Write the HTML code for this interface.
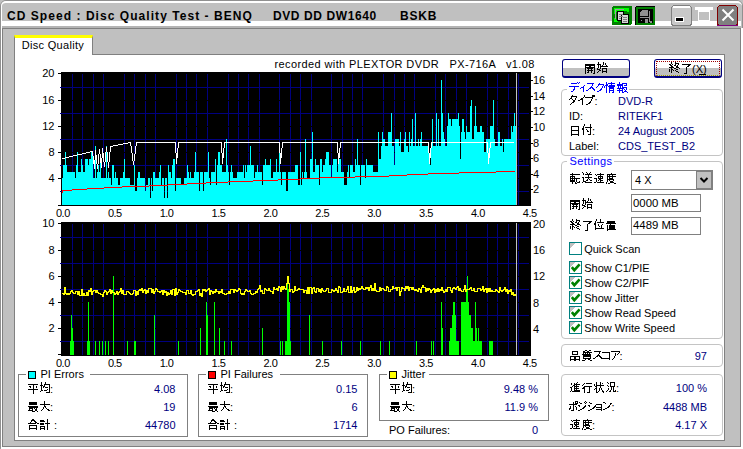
<!DOCTYPE html>
<html><head><meta charset="utf-8"><style>
html,body{margin:0;padding:0;}
body{width:743px;height:449px;overflow:hidden;position:relative;background:#c0c0c0;font-family:'Liberation Sans', sans-serif;font-size:11px;}
.a{position:absolute;box-sizing:border-box;}
.gb{position:absolute;box-sizing:border-box;border:1px solid #c4c4c4;border-radius:4px;}
.sb{position:absolute;box-sizing:border-box;border:1px solid #808080;}
.cb{position:absolute;width:13px;height:13px;box-sizing:border-box;border:1px solid #008080;background:#fff;}
</style></head><body>
<div class="a" style="left:0;top:0;width:743px;height:449px;border-radius:6px 6px 0 0;border:1px solid #909090;background:#c0c0c0"></div>
<div class="a" style="left:1px;top:1px;width:741px;height:447px;border-radius:5px 5px 0 0;border-top:2px solid #fff;border-left:1px solid #fff;"></div>
<div class="a" style="left:2px;top:28px;width:739px;height:419px;border:1px solid #808080"></div>
<div class="a" style="left:1px;top:447px;width:742px;height:2px;background:#fff"></div>
<div class="a" style="left:741px;top:28px;width:2px;height:421px;background:#fff"></div>
<div class="a" style="left:2px;top:21px;width:739px;height:5px;background:#fff"></div>
<div class="a" style="left:2px;top:26px;width:739px;height:2px;background:#b4b4b4"></div>
<svg class="a" style="left:611px;top:5px" width="22" height="21" shape-rendering="crispEdges">
<rect x="1" y="1" width="20" height="19" rx="2" fill="#008000"/>
<path d="M3 3h15v4l-4 -1h-8l-3 3z" fill="#00ff00"/>
<path d="M3 13l5 4h-5z" fill="#00ff00"/>
<path d="M4 4h9v1h-8v9h-1z" fill="#a0a0a0"/>
<rect x="6.5" y="6.5" width="6" height="9" fill="#d8d8d8" stroke="#000"/>
<rect x="10.5" y="9.5" width="7" height="9" fill="#d8d8d8" stroke="#000"/>
<path d="M8 9h4M8 11h4M8 13h2M12 12h4M12 14h4M12 16h4" stroke="#808080"/>
</svg>
<svg class="a" style="left:634px;top:5px" width="22" height="21" shape-rendering="crispEdges">
<rect x="1" y="1" width="20" height="19" rx="2" fill="#000"/>
<rect x="2.5" y="2.5" width="17" height="16" fill="none" stroke="#008000" stroke-width="2"/>
<path d="M8 5h6v6h-8v-4z" fill="#909090"/>
<path d="M6 12h9M15 6v11M7 15h1M11 14h2v3h-2z" stroke="#909090" fill="#909090"/>
<rect x="16" y="16" width="2" height="2" fill="#909090"/>
</svg>
<svg class="a" style="left:670px;top:4px" width="72" height="23" shape-rendering="crispEdges">
<rect x="1.5" y="1.5" width="20" height="20" rx="3" fill="#c8c8c8" stroke="#808080"/>
<rect x="3" y="2" width="17" height="2" fill="#fff"/>
<rect x="5" y="13" width="9" height="5" fill="#fff"/>
<rect x="6" y="14" width="7" height="3" fill="#000"/>
<path d="M25 3h18v3h-18z" fill="#fff"/>
<rect x="28.5" y="6.5" width="11" height="10" fill="#c0c0c0" stroke="#fff"/>
<rect x="28" y="6" width="12" height="2" fill="#fff"/>
<rect x="47.5" y="1.5" width="20" height="20" rx="3" fill="#808080" stroke="#800000" stroke-width="1"/>
<path d="M47 21h21" stroke="#800080"/>
<path d="M52.5 5.5L63.5 16.5M63.5 5.5L52.5 16.5" stroke="#fff" stroke-width="2" shape-rendering="auto"/>
</svg>
<div class="a" style="left:14px;top:35px;width:79px;height:21px;background:#fff;border-top:3px solid #ffff00;border-right:1px solid #808080;border-left:1px solid #808080"></div>
<div class="a" style="left:14px;top:54px;width:711px;height:387px;background:#fff;border:1px solid #808080"></div>
<div class="a" style="left:15px;top:54px;width:77px;height:2px;background:#fff"></div>

<svg width="743" height="449" style="position:absolute;left:0;top:0" shape-rendering="crispEdges">
<rect x="61" y="72" width="470" height="134" fill="#000"/>
<path d="M72.5 74V100M72.5 101V126M72.5 127V152M72.5 153V178M72.5 179V205M82.5 74V100M82.5 101V126M82.5 127V152M82.5 153V178M82.5 179V205M93.5 74V100M93.5 101V126M93.5 127V152M93.5 153V178M93.5 179V205M103.5 74V100M103.5 101V126M103.5 127V152M103.5 153V178M103.5 179V205M124.5 74V100M124.5 101V126M124.5 127V152M124.5 153V178M124.5 179V205M134.5 74V100M134.5 101V126M134.5 127V152M134.5 153V178M134.5 179V205M145.5 74V100M145.5 101V126M145.5 127V152M145.5 153V178M145.5 179V205M155.5 74V100M155.5 101V126M155.5 127V152M155.5 153V178M155.5 179V205M176.5 74V100M176.5 101V126M176.5 127V152M176.5 153V178M176.5 179V205M186.5 74V100M186.5 101V126M186.5 127V152M186.5 153V178M186.5 179V205M196.5 74V100M196.5 101V126M196.5 127V152M196.5 153V178M196.5 179V205M207.5 74V100M207.5 101V126M207.5 127V152M207.5 153V178M207.5 179V205M228.5 74V100M228.5 101V126M228.5 127V152M228.5 153V178M228.5 179V205M238.5 74V100M238.5 101V126M238.5 127V152M238.5 153V178M238.5 179V205M248.5 74V100M248.5 101V126M248.5 127V152M248.5 153V178M248.5 179V205M259.5 74V100M259.5 101V126M259.5 127V152M259.5 153V178M259.5 179V205M279.5 74V100M279.5 101V126M279.5 127V152M279.5 153V178M279.5 179V205M290.5 74V100M290.5 101V126M290.5 127V152M290.5 153V178M290.5 179V205M300.5 74V100M300.5 101V126M300.5 127V152M300.5 153V178M300.5 179V205M311.5 74V100M311.5 101V126M311.5 127V152M311.5 153V178M311.5 179V205M331.5 74V100M331.5 101V126M331.5 127V152M331.5 153V178M331.5 179V205M342.5 74V100M342.5 101V126M342.5 127V152M342.5 153V178M342.5 179V205M352.5 74V100M352.5 101V126M352.5 127V152M352.5 153V178M352.5 179V205M362.5 74V100M362.5 101V126M362.5 127V152M362.5 153V178M362.5 179V205M383.5 74V100M383.5 101V126M383.5 127V152M383.5 153V178M383.5 179V205M394.5 74V100M394.5 101V126M394.5 127V152M394.5 153V178M394.5 179V205M404.5 74V100M404.5 101V126M404.5 127V152M404.5 153V178M404.5 179V205M414.5 74V100M414.5 101V126M414.5 127V152M414.5 153V178M414.5 179V205M435.5 74V100M435.5 101V126M435.5 127V152M435.5 153V178M435.5 179V205M445.5 74V100M445.5 101V126M445.5 127V152M445.5 153V178M445.5 179V205M456.5 74V100M456.5 101V126M456.5 127V152M456.5 153V178M456.5 179V205M466.5 74V100M466.5 101V126M466.5 127V152M466.5 153V178M466.5 179V205M487.5 74V100M487.5 101V126M487.5 127V152M487.5 153V178M487.5 179V205M497.5 74V100M497.5 101V126M497.5 127V152M497.5 153V178M497.5 179V205M508.5 74V100M508.5 101V126M508.5 127V152M508.5 153V178M508.5 179V205M518.5 74V100M518.5 101V126M518.5 127V152M518.5 153V178M518.5 179V205M60 87.5H529M60 113.5H529M60 139.5H529M60 165.5H529M60 191.5H529" stroke="#000080" stroke-width="1" fill="none"/>
<path d="M62 178h1V205h-1zM63 165h1V205h-1zM64 165h1V205h-1zM65 152h1V205h-1zM66 165h1V205h-1zM67 172h1V205h-1zM68 172h1V205h-1zM69 172h1V205h-1zM70 172h1V205h-1zM71 172h1V205h-1zM72 172h1V205h-1zM73 172h1V205h-1zM74 172h1V205h-1zM75 178h1V205h-1zM76 165h1V205h-1zM77 152h1V205h-1zM78 172h1V205h-1zM79 172h1V205h-1zM80 172h1V205h-1zM81 159h1V205h-1zM82 165h1V205h-1zM83 172h1V205h-1zM84 172h1V205h-1zM85 159h1V205h-1zM86 159h1V205h-1zM87 159h1V205h-1zM88 165h1V205h-1zM89 159h1V205h-1zM90 159h1V205h-1zM91 152h1V205h-1zM92 152h1V205h-1zM93 178h1V205h-1zM94 178h1V205h-1zM95 146h1V205h-1zM96 178h1V205h-1zM97 172h1V205h-1zM98 165h1V205h-1zM99 172h1V205h-1zM100 159h1V205h-1zM101 178h1V205h-1zM102 178h1V205h-1zM103 178h1V205h-1zM104 178h1V205h-1zM105 178h1V205h-1zM106 146h1V205h-1zM107 178h1V205h-1zM108 172h1V205h-1zM109 178h1V205h-1zM110 178h1V205h-1zM111 185h1V205h-1zM112 165h1V205h-1zM113 165h1V205h-1zM114 178h1V205h-1zM115 172h1V205h-1zM116 178h1V205h-1zM117 178h1V205h-1zM118 185h1V205h-1zM119 185h1V205h-1zM120 178h1V205h-1zM121 178h1V205h-1zM122 178h1V205h-1zM123 172h1V205h-1zM124 159h1V205h-1zM125 178h1V205h-1zM126 178h1V205h-1zM127 178h1V205h-1zM128 178h1V205h-1zM129 178h1V205h-1zM130 185h1V205h-1zM131 185h1V205h-1zM132 185h1V205h-1zM133 185h1V205h-1zM134 165h1V205h-1zM135 191h1V205h-1zM136 191h1V205h-1zM137 178h1V205h-1zM138 172h1V205h-1zM139 172h1V205h-1zM140 178h1V205h-1zM141 178h1V205h-1zM142 178h1V205h-1zM143 178h1V205h-1zM144 178h1V205h-1zM145 191h1V205h-1zM146 185h1V205h-1zM147 185h1V205h-1zM148 178h1V205h-1zM149 178h1V205h-1zM150 198h1V205h-1zM151 178h1V205h-1zM152 191h1V205h-1zM153 172h1V205h-1zM154 172h1V205h-1zM155 178h1V205h-1zM156 178h1V205h-1zM157 178h1V205h-1zM158 178h1V205h-1zM159 172h1V205h-1zM160 165h1V205h-1zM161 185h1V205h-1zM162 178h1V205h-1zM163 178h1V205h-1zM164 198h1V205h-1zM165 178h1V205h-1zM166 178h1V205h-1zM167 198h1V205h-1zM168 165h1V205h-1zM169 172h1V205h-1zM170 172h1V205h-1zM171 178h1V205h-1zM172 165h1V205h-1zM173 159h1V205h-1zM174 159h1V205h-1zM175 191h1V205h-1zM176 178h1V205h-1zM177 178h1V205h-1zM178 178h1V205h-1zM179 178h1V205h-1zM180 178h1V205h-1zM181 185h1V205h-1zM182 185h1V205h-1zM183 185h1V205h-1zM184 178h1V205h-1zM185 178h1V205h-1zM186 178h1V205h-1zM187 165h1V205h-1zM188 172h1V205h-1zM189 178h1V205h-1zM190 172h1V205h-1zM191 178h1V205h-1zM192 178h1V205h-1zM193 178h1V205h-1zM194 172h1V205h-1zM195 152h1V205h-1zM196 172h1V205h-1zM197 172h1V205h-1zM198 172h1V205h-1zM199 191h1V205h-1zM200 172h1V205h-1zM201 172h1V205h-1zM202 172h1V205h-1zM203 191h1V205h-1zM204 172h1V205h-1zM205 172h1V205h-1zM206 172h1V205h-1zM207 172h1V205h-1zM208 152h1V205h-1zM209 178h1V205h-1zM210 185h1V205h-1zM211 172h1V205h-1zM212 172h1V205h-1zM213 172h1V205h-1zM214 172h1V205h-1zM215 159h1V205h-1zM216 185h1V205h-1zM217 165h1V205h-1zM218 152h1V205h-1zM219 152h1V205h-1zM220 165h1V205h-1zM221 165h1V205h-1zM222 172h1V205h-1zM223 172h1V205h-1zM224 172h1V205h-1zM225 172h1V205h-1zM226 139h1V205h-1zM227 165h1V205h-1zM228 172h1V205h-1zM229 185h1V205h-1zM230 172h1V205h-1zM231 165h1V205h-1zM232 172h1V205h-1zM233 178h1V205h-1zM234 178h1V205h-1zM235 178h1V205h-1zM236 178h1V205h-1zM237 172h1V205h-1zM238 172h1V205h-1zM239 172h1V205h-1zM240 172h1V205h-1zM241 172h1V205h-1zM242 172h1V205h-1zM243 165h1V205h-1zM244 178h1V205h-1zM245 165h1V205h-1zM246 172h1V205h-1zM247 165h1V205h-1zM248 165h1V205h-1zM249 165h1V205h-1zM250 146h1V205h-1zM251 165h1V205h-1zM252 165h1V205h-1zM253 165h1V205h-1zM254 178h1V205h-1zM255 172h1V205h-1zM256 172h1V205h-1zM257 165h1V205h-1zM258 172h1V205h-1zM259 172h1V205h-1zM260 172h1V205h-1zM261 172h1V205h-1zM262 185h1V205h-1zM263 165h1V205h-1zM264 165h1V205h-1zM265 159h1V205h-1zM266 165h1V205h-1zM267 165h1V205h-1zM268 165h1V205h-1zM269 165h1V205h-1zM270 159h1V205h-1zM271 178h1V205h-1zM272 178h1V205h-1zM273 172h1V205h-1zM274 172h1V205h-1zM275 172h1V205h-1zM276 159h1V205h-1zM277 172h1V205h-1zM278 172h1V205h-1zM279 152h1V205h-1zM280 172h1V205h-1zM281 185h1V205h-1zM282 172h1V205h-1zM283 172h1V205h-1zM284 172h1V205h-1zM285 172h1V205h-1zM286 191h1V205h-1zM287 191h1V205h-1zM288 172h1V205h-1zM289 172h1V205h-1zM290 172h1V205h-1zM291 172h1V205h-1zM292 172h1V205h-1zM293 172h1V205h-1zM294 172h1V205h-1zM295 165h1V205h-1zM296 165h1V205h-1zM297 165h1V205h-1zM298 185h1V205h-1zM299 185h1V205h-1zM300 152h1V205h-1zM301 185h1V205h-1zM302 172h1V205h-1zM303 178h1V205h-1zM304 172h1V205h-1zM305 139h1V205h-1zM306 172h1V205h-1zM307 178h1V205h-1zM308 178h1V205h-1zM309 178h1V205h-1zM310 159h1V205h-1zM311 159h1V205h-1zM312 132h1V205h-1zM313 172h1V205h-1zM314 172h1V205h-1zM315 159h1V205h-1zM316 165h1V205h-1zM317 165h1V205h-1zM318 165h1V205h-1zM319 185h1V205h-1zM320 159h1V205h-1zM321 159h1V205h-1zM322 172h1V205h-1zM323 165h1V205h-1zM324 165h1V205h-1zM325 159h1V205h-1zM326 152h1V205h-1zM327 152h1V205h-1zM328 152h1V205h-1zM329 165h1V205h-1zM330 165h1V205h-1zM331 178h1V205h-1zM332 165h1V205h-1zM333 159h1V205h-1zM334 159h1V205h-1zM335 159h1V205h-1zM336 159h1V205h-1zM337 172h1V205h-1zM338 159h1V205h-1zM339 159h1V205h-1zM340 159h1V205h-1zM341 172h1V205h-1zM342 172h1V205h-1zM343 172h1V205h-1zM344 185h1V205h-1zM345 185h1V205h-1zM346 185h1V205h-1zM347 172h1V205h-1zM348 165h1V205h-1zM349 178h1V205h-1zM350 165h1V205h-1zM351 165h1V205h-1zM352 165h1V205h-1zM353 172h1V205h-1zM354 172h1V205h-1zM355 159h1V205h-1zM356 165h1V205h-1zM357 139h1V205h-1zM358 165h1V205h-1zM359 165h1V205h-1zM360 185h1V205h-1zM361 165h1V205h-1zM362 165h1V205h-1zM363 165h1V205h-1zM364 165h1V205h-1zM365 178h1V205h-1zM366 159h1V205h-1zM367 165h1V205h-1zM368 165h1V205h-1zM369 165h1V205h-1zM370 165h1V205h-1zM371 165h1V205h-1zM372 165h1V205h-1zM373 172h1V205h-1zM374 172h1V205h-1zM375 172h1V205h-1zM376 172h1V205h-1zM377 172h1V205h-1zM378 132h1V205h-1zM379 159h1V205h-1zM380 159h1V205h-1zM381 146h1V205h-1zM382 132h1V205h-1zM383 139h1V205h-1zM384 139h1V205h-1zM385 146h1V205h-1zM386 146h1V205h-1zM387 146h1V205h-1zM388 132h1V205h-1zM389 132h1V205h-1zM390 132h1V205h-1zM391 113h1V205h-1zM392 146h1V205h-1zM393 146h1V205h-1zM394 165h1V205h-1zM395 139h1V205h-1zM396 139h1V205h-1zM397 139h1V205h-1zM398 139h1V205h-1zM399 146h1V205h-1zM400 132h1V205h-1zM401 152h1V205h-1zM402 152h1V205h-1zM403 152h1V205h-1zM404 139h1V205h-1zM405 132h1V205h-1zM406 146h1V205h-1zM407 146h1V205h-1zM408 152h1V205h-1zM409 132h1V205h-1zM410 146h1V205h-1zM411 139h1V205h-1zM412 119h1V205h-1zM413 146h1V205h-1zM414 146h1V205h-1zM415 113h1V205h-1zM416 146h1V205h-1zM417 146h1V205h-1zM418 139h1V205h-1zM419 146h1V205h-1zM420 139h1V205h-1zM421 132h1V205h-1zM422 146h1V205h-1zM423 146h1V205h-1zM424 146h1V205h-1zM425 146h1V205h-1zM426 146h1V205h-1zM427 146h1V205h-1zM428 146h1V205h-1zM429 159h1V205h-1zM430 165h1V205h-1zM431 146h1V205h-1zM432 119h1V205h-1zM433 146h1V205h-1zM434 146h1V205h-1zM435 146h1V205h-1zM436 113h1V205h-1zM437 146h1V205h-1zM438 119h1V205h-1zM439 146h1V205h-1zM440 146h1V205h-1zM441 80h1V205h-1zM442 113h1V205h-1zM443 132h1V205h-1zM444 139h1V205h-1zM445 146h1V205h-1zM446 146h1V205h-1zM447 126h1V205h-1zM448 113h1V205h-1zM449 119h1V205h-1zM450 119h1V205h-1zM451 126h1V205h-1zM452 119h1V205h-1zM453 119h1V205h-1zM454 119h1V205h-1zM455 119h1V205h-1zM456 119h1V205h-1zM457 119h1V205h-1zM458 113h1V205h-1zM459 126h1V205h-1zM460 159h1V205h-1zM461 132h1V205h-1zM462 119h1V205h-1zM463 119h1V205h-1zM464 132h1V205h-1zM465 139h1V205h-1zM466 126h1V205h-1zM467 132h1V205h-1zM468 132h1V205h-1zM469 132h1V205h-1zM470 106h1V205h-1zM471 100h1V205h-1zM472 139h1V205h-1zM473 139h1V205h-1zM474 126h1V205h-1zM475 106h1V205h-1zM476 126h1V205h-1zM477 132h1V205h-1zM478 132h1V205h-1zM479 132h1V205h-1zM480 126h1V205h-1zM481 126h1V205h-1zM482 132h1V205h-1zM483 132h1V205h-1zM484 152h1V205h-1zM485 152h1V205h-1zM486 139h1V205h-1zM487 139h1V205h-1zM488 139h1V205h-1zM489 139h1V205h-1zM490 126h1V205h-1zM491 126h1V205h-1zM492 126h1V205h-1zM493 100h1V205h-1zM494 139h1V205h-1zM495 146h1V205h-1zM496 146h1V205h-1zM497 146h1V205h-1zM498 132h1V205h-1zM499 132h1V205h-1zM500 146h1V205h-1zM501 146h1V205h-1zM502 139h1V205h-1zM503 152h1V205h-1zM504 139h1V205h-1zM505 139h1V205h-1zM506 139h1V205h-1zM507 139h1V205h-1zM508 139h1V205h-1zM509 139h1V205h-1zM510 139h1V205h-1zM511 126h1V205h-1zM512 132h1V205h-1zM513 126h1V205h-1zM514 113h1V205h-1zM515 126h1V205h-1zM516 126h1V205h-1z" fill="#00ffff"/>
<path d="M496 171h19v1h-19zM355 176h34v1h-34zM253 180h25v1h-25zM459 172h37v1h-37zM228 181h25v1h-25zM300 178h20v1h-20zM72 189h15v1h-15zM278 179h22v1h-22zM389 175h18v1h-18zM320 177h35v1h-35zM104 187h18v1h-18zM428 173h31v1h-31zM149 185h19v1h-19zM206 182h22v1h-22zM187 183h19v1h-19zM168 184h19v1h-19zM87 188h17v1h-17zM407 174h21v1h-21zM122 186h27v1h-27zM62 190h10v1h-10zM62 192h1v1h-1zM62 191h1v1h-1z" fill="#ff0000"/>
<path d="M128 142h3v1h-3zM136 142h40v1h-40zM178 142h44v1h-44zM224 142h56v1h-56zM282 142h56v1h-56zM340 142h89v1h-89zM431 142h57v1h-57zM490 142h24v1h-24zM110 146h3v1h-3zM131 146h1v1h-1zM135 146h1v1h-1zM175 146h1v1h-1zM178 146h1v1h-1zM221 146h1v1h-1zM224 146h1v1h-1zM279 146h1v1h-1zM282 146h1v1h-1zM337 146h1v1h-1zM340 146h1v1h-1zM428 146h1v1h-1zM431 146h1v1h-1zM487 146h1v1h-1zM490 146h1v1h-1zM73 155h4v1h-4zM92 155h1v1h-1zM95 155h2v1h-2zM98 155h1v1h-1zM100 155h1v1h-1zM102 155h2v1h-2zM105 155h1v1h-1zM107 155h1v1h-1zM109 155h1v1h-1zM132 155h1v1h-1zM134 155h1v1h-1zM176 155h2v1h-2zM222 155h2v1h-2zM280 155h2v1h-2zM338 155h2v1h-2zM429 155h2v1h-2zM488 155h2v1h-2zM102 148h1v1h-1zM106 148h1v1h-1zM110 148h1v1h-1zM131 148h1v1h-1zM135 148h1v1h-1zM175 148h1v1h-1zM177 148h1v1h-1zM221 148h1v1h-1zM223 148h1v1h-1zM279 148h1v1h-1zM281 148h1v1h-1zM337 148h1v1h-1zM339 148h1v1h-1zM428 148h1v1h-1zM430 148h1v1h-1zM487 148h1v1h-1zM489 148h1v1h-1zM82 153h4v1h-4zM92 153h1v1h-1zM95 153h1v1h-1zM99 153h1v1h-1zM102 153h2v1h-2zM105 153h1v1h-1zM107 153h1v1h-1zM109 153h1v1h-1zM132 153h1v1h-1zM135 153h1v1h-1zM176 153h2v1h-2zM222 153h2v1h-2zM280 153h2v1h-2zM338 153h2v1h-2zM429 153h2v1h-2zM488 153h2v1h-2zM65 157h4v1h-4zM93 157h1v1h-1zM95 157h2v1h-2zM98 157h1v1h-1zM100 157h1v1h-1zM102 157h2v1h-2zM105 157h1v1h-1zM107 157h1v1h-1zM109 157h1v1h-1zM132 157h1v1h-1zM134 157h1v1h-1zM176 157h2v1h-2zM222 157h2v1h-2zM280 157h2v1h-2zM338 157h2v1h-2zM429 157h2v1h-2zM488 157h2v1h-2zM93 159h1v1h-1zM95 159h2v1h-2zM98 159h1v1h-1zM100 159h2v1h-2zM103 159h1v1h-1zM105 159h1v1h-1zM107 159h1v1h-1zM109 159h1v1h-1zM132 159h1v1h-1zM134 159h1v1h-1zM176 159h1v1h-1zM222 159h1v1h-1zM280 159h1v1h-1zM338 159h1v1h-1zM429 159h1v1h-1zM488 159h1v1h-1zM94 166h1v1h-1zM97 166h1v1h-1zM101 166h1v1h-1zM104 166h1v1h-1zM108 166h1v1h-1zM62 158h3v1h-3zM93 158h1v1h-1zM95 158h2v1h-2zM98 158h1v1h-1zM100 158h2v1h-2zM103 158h1v1h-1zM105 158h1v1h-1zM107 158h1v1h-1zM109 158h1v1h-1zM132 158h1v1h-1zM134 158h1v1h-1zM176 158h1v1h-1zM222 158h1v1h-1zM280 158h1v1h-1zM338 158h1v1h-1zM429 158h1v1h-1zM488 158h1v1h-1zM93 160h2v1h-2zM96 160h1v1h-1zM98 160h1v1h-1zM100 160h2v1h-2zM103 160h1v1h-1zM105 160h1v1h-1zM107 160h1v1h-1zM109 160h1v1h-1zM132 160h1v1h-1zM134 160h1v1h-1zM176 160h1v1h-1zM222 160h1v1h-1zM280 160h1v1h-1zM338 160h1v1h-1zM429 160h1v1h-1zM488 160h1v1h-1zM77 154h5v1h-5zM92 154h1v1h-1zM95 154h1v1h-1zM98 154h1v1h-1zM100 154h1v1h-1zM102 154h2v1h-2zM105 154h1v1h-1zM107 154h1v1h-1zM109 154h1v1h-1zM132 154h1v1h-1zM134 154h1v1h-1zM176 154h2v1h-2zM222 154h2v1h-2zM280 154h2v1h-2zM338 154h2v1h-2zM429 154h2v1h-2zM488 154h2v1h-2zM93 163h2v1h-2zM96 163h1v1h-1zM98 163h1v1h-1zM101 163h1v1h-1zM104 163h1v1h-1zM108 163h1v1h-1zM133 163h1v1h-1zM176 163h1v1h-1zM222 163h1v1h-1zM280 163h1v1h-1zM338 163h1v1h-1zM429 163h1v1h-1zM488 163h1v1h-1zM69 156h4v1h-4zM93 156h1v1h-1zM95 156h2v1h-2zM98 156h1v1h-1zM100 156h1v1h-1zM102 156h2v1h-2zM105 156h1v1h-1zM107 156h1v1h-1zM109 156h1v1h-1zM132 156h1v1h-1zM134 156h1v1h-1zM176 156h2v1h-2zM222 156h2v1h-2zM280 156h2v1h-2zM338 156h2v1h-2zM429 156h2v1h-2zM488 156h2v1h-2zM93 162h2v1h-2zM96 162h1v1h-1zM98 162h1v1h-1zM100 162h2v1h-2zM104 162h1v1h-1zM108 162h1v1h-1zM133 162h1v1h-1zM176 162h1v1h-1zM222 162h1v1h-1zM280 162h1v1h-1zM338 162h1v1h-1zM429 162h1v1h-1zM488 162h1v1h-1zM95 150h1v1h-1zM99 150h1v1h-1zM102 150h1v1h-1zM106 150h1v1h-1zM110 150h1v1h-1zM131 150h1v1h-1zM135 150h1v1h-1zM175 150h1v1h-1zM177 150h1v1h-1zM221 150h1v1h-1zM223 150h1v1h-1zM279 150h1v1h-1zM281 150h1v1h-1zM337 150h1v1h-1zM339 150h1v1h-1zM428 150h1v1h-1zM430 150h1v1h-1zM487 150h1v1h-1zM489 150h1v1h-1zM99 149h1v1h-1zM102 149h1v1h-1zM106 149h1v1h-1zM110 149h1v1h-1zM131 149h1v1h-1zM135 149h1v1h-1zM175 149h1v1h-1zM177 149h1v1h-1zM221 149h1v1h-1zM223 149h1v1h-1zM279 149h1v1h-1zM281 149h1v1h-1zM337 149h1v1h-1zM339 149h1v1h-1zM428 149h1v1h-1zM430 149h1v1h-1zM487 149h1v1h-1zM489 149h1v1h-1zM118 144h5v1h-5zM130 144h1v1h-1zM136 144h1v1h-1zM175 144h1v1h-1zM178 144h1v1h-1zM221 144h1v1h-1zM224 144h1v1h-1zM279 144h1v1h-1zM282 144h1v1h-1zM337 144h1v1h-1zM340 144h1v1h-1zM428 144h1v1h-1zM431 144h1v1h-1zM487 144h1v1h-1zM490 144h1v1h-1zM123 143h5v1h-5zM130 143h1v1h-1zM136 143h1v1h-1zM175 143h1v1h-1zM178 143h1v1h-1zM221 143h1v1h-1zM224 143h1v1h-1zM279 143h1v1h-1zM282 143h1v1h-1zM337 143h1v1h-1zM340 143h1v1h-1zM428 143h1v1h-1zM431 143h1v1h-1zM487 143h1v1h-1zM490 143h1v1h-1zM86 152h4v1h-4zM92 152h1v1h-1zM95 152h1v1h-1zM99 152h1v1h-1zM102 152h1v1h-1zM105 152h1v1h-1zM107 152h1v1h-1zM109 152h1v1h-1zM131 152h1v1h-1zM135 152h1v1h-1zM175 152h1v1h-1zM177 152h1v1h-1zM221 152h1v1h-1zM223 152h1v1h-1zM279 152h1v1h-1zM281 152h1v1h-1zM337 152h1v1h-1zM339 152h1v1h-1zM428 152h1v1h-1zM430 152h1v1h-1zM487 152h1v1h-1zM489 152h1v1h-1zM94 167h1v1h-1zM97 167h1v1h-1zM101 167h1v1h-1zM108 167h1v1h-1zM90 151h3v1h-3zM95 151h1v1h-1zM99 151h1v1h-1zM102 151h1v1h-1zM106 151h1v1h-1zM110 151h1v1h-1zM131 151h1v1h-1zM135 151h1v1h-1zM175 151h1v1h-1zM177 151h1v1h-1zM221 151h1v1h-1zM223 151h1v1h-1zM279 151h1v1h-1zM281 151h1v1h-1zM337 151h1v1h-1zM339 151h1v1h-1zM428 151h1v1h-1zM430 151h1v1h-1zM487 151h1v1h-1zM489 151h1v1h-1zM93 161h2v1h-2zM96 161h1v1h-1zM98 161h1v1h-1zM100 161h2v1h-2zM103 161h1v1h-1zM105 161h1v1h-1zM107 161h1v1h-1zM109 161h1v1h-1zM133 161h1v1h-1zM176 161h1v1h-1zM222 161h1v1h-1zM280 161h1v1h-1zM338 161h1v1h-1zM429 161h1v1h-1zM488 161h1v1h-1zM113 145h5v1h-5zM130 145h1v1h-1zM136 145h1v1h-1zM175 145h1v1h-1zM178 145h1v1h-1zM221 145h1v1h-1zM224 145h1v1h-1zM279 145h1v1h-1zM282 145h1v1h-1zM337 145h1v1h-1zM340 145h1v1h-1zM428 145h1v1h-1zM431 145h1v1h-1zM487 145h1v1h-1zM490 145h1v1h-1zM106 147h1v1h-1zM110 147h1v1h-1zM131 147h1v1h-1zM135 147h1v1h-1zM175 147h1v1h-1zM178 147h1v1h-1zM221 147h1v1h-1zM224 147h1v1h-1zM279 147h1v1h-1zM282 147h1v1h-1zM337 147h1v1h-1zM340 147h1v1h-1zM428 147h1v1h-1zM431 147h1v1h-1zM487 147h1v1h-1zM490 147h1v1h-1zM94 165h1v1h-1zM97 165h1v1h-1zM101 165h1v1h-1zM104 165h1v1h-1zM108 165h1v1h-1zM94 164h1v1h-1zM97 164h1v1h-1zM101 164h1v1h-1zM104 164h1v1h-1zM108 164h1v1h-1zM133 164h1v1h-1zM94 168h1v1h-1zM97 168h1v1h-1z" fill="#ffffff"/>
<rect x="516" y="73" width="1" height="132" fill="#c0c0c0"/>
<rect x="61" y="222" width="470" height="134" fill="#000"/>
<path d="M72.5 224V250M72.5 251V276M72.5 277V302M72.5 303V328M72.5 329V355M82.5 224V250M82.5 251V276M82.5 277V302M82.5 303V328M82.5 329V355M93.5 224V250M93.5 251V276M93.5 277V302M93.5 303V328M93.5 329V355M103.5 224V250M103.5 251V276M103.5 277V302M103.5 303V328M103.5 329V355M124.5 224V250M124.5 251V276M124.5 277V302M124.5 303V328M124.5 329V355M134.5 224V250M134.5 251V276M134.5 277V302M134.5 303V328M134.5 329V355M145.5 224V250M145.5 251V276M145.5 277V302M145.5 303V328M145.5 329V355M155.5 224V250M155.5 251V276M155.5 277V302M155.5 303V328M155.5 329V355M176.5 224V250M176.5 251V276M176.5 277V302M176.5 303V328M176.5 329V355M186.5 224V250M186.5 251V276M186.5 277V302M186.5 303V328M186.5 329V355M196.5 224V250M196.5 251V276M196.5 277V302M196.5 303V328M196.5 329V355M207.5 224V250M207.5 251V276M207.5 277V302M207.5 303V328M207.5 329V355M228.5 224V250M228.5 251V276M228.5 277V302M228.5 303V328M228.5 329V355M238.5 224V250M238.5 251V276M238.5 277V302M238.5 303V328M238.5 329V355M248.5 224V250M248.5 251V276M248.5 277V302M248.5 303V328M248.5 329V355M259.5 224V250M259.5 251V276M259.5 277V302M259.5 303V328M259.5 329V355M279.5 224V250M279.5 251V276M279.5 277V302M279.5 303V328M279.5 329V355M290.5 224V250M290.5 251V276M290.5 277V302M290.5 303V328M290.5 329V355M300.5 224V250M300.5 251V276M300.5 277V302M300.5 303V328M300.5 329V355M311.5 224V250M311.5 251V276M311.5 277V302M311.5 303V328M311.5 329V355M331.5 224V250M331.5 251V276M331.5 277V302M331.5 303V328M331.5 329V355M342.5 224V250M342.5 251V276M342.5 277V302M342.5 303V328M342.5 329V355M352.5 224V250M352.5 251V276M352.5 277V302M352.5 303V328M352.5 329V355M362.5 224V250M362.5 251V276M362.5 277V302M362.5 303V328M362.5 329V355M383.5 224V250M383.5 251V276M383.5 277V302M383.5 303V328M383.5 329V355M394.5 224V250M394.5 251V276M394.5 277V302M394.5 303V328M394.5 329V355M404.5 224V250M404.5 251V276M404.5 277V302M404.5 303V328M404.5 329V355M414.5 224V250M414.5 251V276M414.5 277V302M414.5 303V328M414.5 329V355M435.5 224V250M435.5 251V276M435.5 277V302M435.5 303V328M435.5 329V355M445.5 224V250M445.5 251V276M445.5 277V302M445.5 303V328M445.5 329V355M456.5 224V250M456.5 251V276M456.5 277V302M456.5 303V328M456.5 329V355M466.5 224V250M466.5 251V276M466.5 277V302M466.5 303V328M466.5 329V355M487.5 224V250M487.5 251V276M487.5 277V302M487.5 303V328M487.5 329V355M497.5 224V250M497.5 251V276M497.5 277V302M497.5 303V328M497.5 329V355M508.5 224V250M508.5 251V276M508.5 277V302M508.5 303V328M508.5 329V355M518.5 224V250M518.5 251V276M518.5 277V302M518.5 303V328M518.5 329V355M60 237.5H529M60 263.5H529M60 289.5H529M60 315.5H529M60 341.5H529" stroke="#000080" stroke-width="1" fill="none"/>
<path d="M70 341h1V355h-1zM71 315h1V355h-1zM72 328h1V355h-1zM73 341h1V355h-1zM87 341h1V355h-1zM88 302h1V355h-1zM89 341h1V355h-1zM95 341h1V355h-1zM99 341h1V355h-1zM102 341h1V355h-1zM105 341h1V355h-1zM108 341h1V355h-1zM113 276h1V355h-1zM127 341h1V355h-1zM134 341h1V355h-1zM135 341h1V355h-1zM154 315h1V355h-1zM178 341h1V355h-1zM200 328h1V355h-1zM206 302h1V355h-1zM207 315h1V355h-1zM214 302h1V355h-1zM219 328h1V355h-1zM224 341h1V355h-1zM231 341h1V355h-1zM262 328h1V355h-1zM280 341h1V355h-1zM282 341h1V355h-1zM285 341h1V355h-1zM286 341h1V355h-1zM287 276h1V355h-1zM288 289h1V355h-1zM289 302h1V355h-1zM290 341h1V355h-1zM309 315h1V355h-1zM322 341h1V355h-1zM341 341h1V355h-1zM360 341h1V355h-1zM380 341h1V355h-1zM389 341h1V355h-1zM416 341h1V355h-1zM431 341h1V355h-1zM433 341h1V355h-1zM441 302h1V355h-1zM442 328h1V355h-1zM449 341h1V355h-1zM450 328h1V355h-1zM451 328h1V355h-1zM452 315h1V355h-1zM453 302h1V355h-1zM454 302h1V355h-1zM455 315h1V355h-1zM456 341h1V355h-1zM457 341h1V355h-1zM458 341h1V355h-1zM461 302h1V355h-1zM462 302h1V355h-1zM463 302h1V355h-1zM464 302h1V355h-1zM465 302h1V355h-1zM466 289h1V355h-1zM467 276h1V355h-1zM468 302h1V355h-1zM469 315h1V355h-1zM470 315h1V355h-1zM471 328h1V355h-1zM472 328h1V355h-1zM473 341h1V355h-1zM474 341h1V355h-1zM475 302h1V355h-1zM476 328h1V355h-1zM477 341h1V355h-1zM478 328h1V355h-1zM479 341h1V355h-1zM480 341h1V355h-1zM481 341h1V355h-1zM489 341h1V355h-1zM490 341h1V355h-1zM491 341h1V355h-1zM492 341h1V355h-1z" fill="#00ff00"/>
<path d="M62 293h1V294h-1zM63 293h1V295h-1zM64 287h1V295h-1zM65 287h1V294h-1zM66 293h1V295h-1zM67 293h1V295h-1zM68 293h1V295h-1zM69 293h1V295h-1zM70 291h1V294h-1zM71 290h1V292h-1zM72 290h1V293h-1zM73 292h1V294h-1zM74 293h1V294h-1zM75 291h1V294h-1zM76 291h1V292h-1zM77 291h1V295h-1zM78 291h1V295h-1zM79 291h1V296h-1zM80 295h1V296h-1zM81 289h1V296h-1zM82 289h1V296h-1zM83 293h1V296h-1zM84 293h1V296h-1zM85 295h1V296h-1zM86 292h1V296h-1zM87 292h1V296h-1zM88 290h1V296h-1zM89 290h1V292h-1zM90 288h1V292h-1zM91 288h1V295h-1zM92 291h1V295h-1zM93 290h1V292h-1zM94 290h1V291h-1zM95 290h1V293h-1zM96 290h1V293h-1zM97 290h1V293h-1zM98 292h1V294h-1zM99 293h1V294h-1zM100 293h1V295h-1zM101 294h1V295h-1zM102 294h1V297h-1zM103 292h1V297h-1zM104 290h1V293h-1zM105 290h1V292h-1zM106 291h1V295h-1zM107 292h1V295h-1zM108 291h1V293h-1zM109 289h1V292h-1zM110 289h1V294h-1zM111 290h1V294h-1zM112 290h1V293h-1zM113 292h1V293h-1zM114 292h1V295h-1zM115 293h1V295h-1zM116 291h1V294h-1zM117 291h1V295h-1zM118 292h1V295h-1zM119 291h1V293h-1zM120 288h1V292h-1zM121 288h1V294h-1zM122 290h1V294h-1zM123 290h1V295h-1zM124 294h1V295h-1zM125 294h1V295h-1zM126 291h1V295h-1zM127 291h1V292h-1zM128 291h1V293h-1zM129 292h1V294h-1zM130 293h1V295h-1zM131 294h1V295h-1zM132 293h1V295h-1zM133 290h1V294h-1zM134 290h1V291h-1zM135 290h1V296h-1zM136 291h1V296h-1zM137 291h1V295h-1zM138 290h1V295h-1zM139 289h1V291h-1zM140 289h1V291h-1zM141 288h1V291h-1zM142 288h1V293h-1zM143 290h1V293h-1zM144 289h1V291h-1zM145 289h1V294h-1zM146 290h1V294h-1zM147 290h1V293h-1zM148 288h1V293h-1zM149 288h1V289h-1zM150 288h1V289h-1zM151 288h1V293h-1zM152 289h1V293h-1zM153 289h1V294h-1zM154 291h1V294h-1zM155 288h1V292h-1zM156 288h1V290h-1zM157 289h1V292h-1zM158 291h1V292h-1zM159 291h1V293h-1zM160 291h1V293h-1zM161 290h1V292h-1zM162 290h1V295h-1zM163 290h1V295h-1zM164 290h1V293h-1zM165 291h1V293h-1zM166 291h1V296h-1zM167 292h1V296h-1zM168 292h1V295h-1zM169 293h1V295h-1zM170 290h1V294h-1zM171 290h1V295h-1zM172 289h1V295h-1zM173 289h1V290h-1zM174 289h1V296h-1zM175 288h1V296h-1zM176 288h1V295h-1zM177 292h1V295h-1zM178 289h1V293h-1zM179 289h1V291h-1zM180 290h1V292h-1zM181 291h1V292h-1zM182 291h1V293h-1zM183 292h1V293h-1zM184 292h1V293h-1zM185 292h1V295h-1zM186 290h1V295h-1zM187 290h1V291h-1zM188 290h1V294h-1zM189 293h1V294h-1zM190 290h1V294h-1zM191 290h1V295h-1zM192 294h1V296h-1zM193 294h1V296h-1zM194 294h1V295h-1zM195 291h1V295h-1zM196 291h1V292h-1zM197 290h1V292h-1zM198 289h1V291h-1zM199 289h1V296h-1zM200 293h1V296h-1zM201 293h1V297h-1zM202 289h1V297h-1zM203 289h1V291h-1zM204 289h1V291h-1zM205 289h1V292h-1zM206 290h1V292h-1zM207 289h1V291h-1zM208 288h1V290h-1zM209 288h1V295h-1zM210 290h1V295h-1zM211 290h1V292h-1zM212 291h1V294h-1zM213 291h1V294h-1zM214 291h1V293h-1zM215 289h1V293h-1zM216 289h1V292h-1zM217 291h1V292h-1zM218 291h1V294h-1zM219 291h1V294h-1zM220 291h1V293h-1zM221 289h1V293h-1zM222 289h1V294h-1zM223 293h1V294h-1zM224 293h1V295h-1zM225 294h1V295h-1zM226 293h1V295h-1zM227 293h1V294h-1zM228 291h1V294h-1zM229 291h1V294h-1zM230 289h1V294h-1zM231 289h1V290h-1zM232 289h1V290h-1zM233 289h1V293h-1zM234 289h1V293h-1zM235 289h1V291h-1zM236 290h1V292h-1zM237 290h1V292h-1zM238 288h1V291h-1zM239 288h1V290h-1zM240 289h1V294h-1zM241 293h1V295h-1zM242 293h1V295h-1zM243 293h1V295h-1zM244 291h1V295h-1zM245 289h1V292h-1zM246 289h1V291h-1zM247 290h1V292h-1zM248 291h1V292h-1zM249 290h1V292h-1zM250 290h1V294h-1zM251 293h1V295h-1zM252 294h1V295h-1zM253 293h1V295h-1zM254 293h1V294h-1zM255 291h1V294h-1zM256 291h1V293h-1zM257 289h1V293h-1zM258 288h1V290h-1zM259 285h1V289h-1zM260 285h1V292h-1zM261 290h1V292h-1zM262 290h1V294h-1zM263 293h1V294h-1zM264 288h1V294h-1zM265 288h1V290h-1zM266 289h1V291h-1zM267 290h1V291h-1zM268 288h1V291h-1zM269 288h1V291h-1zM270 290h1V292h-1zM271 291h1V292h-1zM272 291h1V294h-1zM273 287h1V294h-1zM274 287h1V290h-1zM275 289h1V290h-1zM276 288h1V290h-1zM277 288h1V291h-1zM278 286h1V291h-1zM279 286h1V288h-1zM280 287h1V292h-1zM281 286h1V292h-1zM282 286h1V290h-1zM283 286h1V290h-1zM284 286h1V289h-1zM285 288h1V290h-1zM286 283h1V290h-1zM287 276h1V284h-1zM288 276h1V284h-1zM289 283h1V292h-1zM290 289h1V292h-1zM291 289h1V290h-1zM292 289h1V293h-1zM293 291h1V293h-1zM294 286h1V292h-1zM295 286h1V291h-1zM296 290h1V291h-1zM297 289h1V291h-1zM298 288h1V290h-1zM299 288h1V290h-1zM300 289h1V290h-1zM301 289h1V290h-1zM302 289h1V290h-1zM303 289h1V293h-1zM304 290h1V293h-1zM305 290h1V291h-1zM306 290h1V294h-1zM307 287h1V294h-1zM308 287h1V294h-1zM309 287h1V294h-1zM310 287h1V288h-1zM311 287h1V294h-1zM312 288h1V294h-1zM313 287h1V289h-1zM314 287h1V292h-1zM315 291h1V293h-1zM316 288h1V293h-1zM317 288h1V289h-1zM318 288h1V292h-1zM319 289h1V292h-1zM320 289h1V293h-1zM321 288h1V293h-1zM322 288h1V291h-1zM323 290h1V292h-1zM324 291h1V292h-1zM325 290h1V292h-1zM326 288h1V291h-1zM327 288h1V289h-1zM328 288h1V293h-1zM329 292h1V293h-1zM330 292h1V293h-1zM331 289h1V293h-1zM332 289h1V291h-1zM333 290h1V292h-1zM334 290h1V292h-1zM335 288h1V291h-1zM336 288h1V291h-1zM337 290h1V293h-1zM338 286h1V293h-1zM339 286h1V288h-1zM340 287h1V293h-1zM341 292h1V293h-1zM342 291h1V293h-1zM343 288h1V292h-1zM344 288h1V292h-1zM345 291h1V292h-1zM346 289h1V292h-1zM347 286h1V290h-1zM348 286h1V293h-1zM349 292h1V293h-1zM350 286h1V293h-1zM351 286h1V293h-1zM352 290h1V293h-1zM353 287h1V291h-1zM354 287h1V293h-1zM355 291h1V293h-1zM356 287h1V292h-1zM357 287h1V291h-1zM358 288h1V291h-1zM359 288h1V290h-1zM360 288h1V290h-1zM361 286h1V289h-1zM362 286h1V289h-1zM363 288h1V290h-1zM364 289h1V290h-1zM365 287h1V290h-1zM366 287h1V289h-1zM367 287h1V289h-1zM368 287h1V291h-1zM369 287h1V291h-1zM370 285h1V288h-1zM371 285h1V291h-1zM372 288h1V291h-1zM373 288h1V291h-1zM374 283h1V291h-1zM375 283h1V291h-1zM376 290h1V292h-1zM377 291h1V292h-1zM378 291h1V292h-1zM379 287h1V292h-1zM380 287h1V291h-1zM381 288h1V291h-1zM382 288h1V289h-1zM383 288h1V290h-1zM384 289h1V291h-1zM385 290h1V291h-1zM386 286h1V291h-1zM387 286h1V288h-1zM388 287h1V292h-1zM389 291h1V292h-1zM390 289h1V292h-1zM391 289h1V290h-1zM392 286h1V290h-1zM393 286h1V289h-1zM394 288h1V289h-1zM395 287h1V289h-1zM396 287h1V291h-1zM397 287h1V291h-1zM398 287h1V288h-1zM399 287h1V296h-1zM400 291h1V296h-1zM401 287h1V292h-1zM402 287h1V289h-1zM403 288h1V289h-1zM404 288h1V291h-1zM405 286h1V291h-1zM406 286h1V289h-1zM407 286h1V289h-1zM408 286h1V291h-1zM409 287h1V291h-1zM410 287h1V288h-1zM411 287h1V290h-1zM412 287h1V290h-1zM413 287h1V290h-1zM414 289h1V291h-1zM415 289h1V291h-1zM416 289h1V291h-1zM417 290h1V292h-1zM418 288h1V292h-1zM419 288h1V290h-1zM420 289h1V293h-1zM421 287h1V293h-1zM422 285h1V288h-1zM423 285h1V288h-1zM424 287h1V288h-1zM425 287h1V292h-1zM426 288h1V292h-1zM427 288h1V291h-1zM428 288h1V291h-1zM429 288h1V290h-1zM430 289h1V293h-1zM431 290h1V293h-1zM432 289h1V291h-1zM433 288h1V290h-1zM434 288h1V293h-1zM435 289h1V293h-1zM436 289h1V292h-1zM437 288h1V292h-1zM438 288h1V292h-1zM439 289h1V292h-1zM440 289h1V291h-1zM441 287h1V291h-1zM442 287h1V291h-1zM443 290h1V293h-1zM444 291h1V293h-1zM445 289h1V292h-1zM446 289h1V292h-1zM447 287h1V292h-1zM448 287h1V288h-1zM449 287h1V288h-1zM450 287h1V291h-1zM451 290h1V293h-1zM452 288h1V293h-1zM453 287h1V289h-1zM454 287h1V289h-1zM455 288h1V290h-1zM456 287h1V290h-1zM457 286h1V288h-1zM458 286h1V291h-1zM459 288h1V291h-1zM460 288h1V291h-1zM461 290h1V292h-1zM462 291h1V292h-1zM463 289h1V292h-1zM464 285h1V290h-1zM465 285h1V292h-1zM466 289h1V292h-1zM467 289h1V290h-1zM468 289h1V290h-1zM469 288h1V290h-1zM470 287h1V289h-1zM471 287h1V291h-1zM472 290h1V291h-1zM473 288h1V291h-1zM474 288h1V292h-1zM475 291h1V292h-1zM476 291h1V292h-1zM477 288h1V292h-1zM478 288h1V289h-1zM479 288h1V289h-1zM480 288h1V291h-1zM481 289h1V291h-1zM482 286h1V290h-1zM483 286h1V292h-1zM484 289h1V292h-1zM485 288h1V290h-1zM486 288h1V293h-1zM487 288h1V293h-1zM488 288h1V292h-1zM489 288h1V292h-1zM490 288h1V292h-1zM491 290h1V292h-1zM492 290h1V292h-1zM493 291h1V292h-1zM494 291h1V292h-1zM495 289h1V292h-1zM496 289h1V291h-1zM497 290h1V292h-1zM498 291h1V293h-1zM499 287h1V293h-1zM500 287h1V291h-1zM501 290h1V292h-1zM502 290h1V292h-1zM503 289h1V291h-1zM504 287h1V290h-1zM505 287h1V292h-1zM506 289h1V292h-1zM507 289h1V294h-1zM508 290h1V294h-1zM509 290h1V292h-1zM510 289h1V292h-1zM511 289h1V295h-1zM512 292h1V295h-1zM513 292h1V296h-1zM514 294h1V296h-1zM515 294h1V296h-1zM516 295h1V296h-1z" fill="#ffff00"/>
<rect x="516" y="223" width="1" height="132" fill="#c0c0c0"/>
<path d="M58 73.5H61M58 100.5H61M58 126.5H61M58 152.5H61M58 178.5H61M58 205.5H61M531 80.5H533M531 96.5H533M531 111.5H533M531 127.5H533M531 143.5H533M531 158.5H533M531 174.5H533M531 189.5H533M58 223.5H61M58 250.5H61M58 276.5H61M58 302.5H61M58 328.5H61M58 354.5H61" stroke="#000" stroke-width="1"/>
</svg>

<div class="a" style="left:562px;top:59px;width:68px;height:19px;border:1px solid #000080;border-bottom-width:2px;border-radius:3px;background:linear-gradient(#fff 0,#fff 50%,#c0c0c0 50%,#c0c0c0 100%)"></div>
<div class="a" style="left:654px;top:59px;width:68px;height:19px;border:1px solid #000080;border-bottom-width:2px;border-radius:3px;background:linear-gradient(#fff 0,#fff 50%,#c0c0c0 50%,#c0c0c0 100%)"></div>
<div class="a" style="left:656px;top:61px;width:64px;height:15px;border:1px dotted #a00000;border-bottom-color:#a0a000"></div>

<div class="gb" style="left:561px;top:89px;width:162px;height:67px"></div>
<div class="a" style="left:567px;top:84px;width:62px;height:8px;background:#fff"></div>
<div class="gb" style="left:561px;top:161px;width:162px;height:178px"></div>
<div class="a" style="left:567px;top:156px;width:47px;height:8px;background:#fff"></div>
<div class="a" style="left:631px;top:170px;width:82px;height:20px;border:1px solid #808080;background:#fff"></div>
<div class="a" style="left:696px;top:171px;width:16px;height:18px;background:#c0c0c0;border:1px solid #808080"></div>
<svg class="a" style="left:698px;top:174px" width="12" height="12" viewBox="0 0 12 12"><path d="M2.5 4L6 7.5L9.5 4" stroke="#000" stroke-width="2" fill="none"/></svg>
<div class="a" style="left:631px;top:194px;width:70px;height:18px;border:1px solid #808080;background:#fff"></div>
<div class="a" style="left:631px;top:217px;width:70px;height:18px;border:1px solid #808080;background:#fff"></div>
<svg class="a" style="left:569px;top:242px" width="13" height="13" shape-rendering="crispEdges"><rect x="0.5" y="0.5" width="12" height="12" fill="#fff" stroke="#008080"/><path d="M1 1h5l-5 5z" fill="#c0c0c0"/></svg>
<svg class="a" style="left:569px;top:261px" width="13" height="13" shape-rendering="crispEdges"><rect x="0.5" y="0.5" width="12" height="12" fill="#fff" stroke="#008080"/><path d="M1 1h5l-5 5z" fill="#c0c0c0"/><path d="M2.8 6.2L5.3 9.2L10.6 3.4" stroke="#008000" stroke-width="2.6" fill="none" shape-rendering="auto"/></svg>
<svg class="a" style="left:569px;top:276px" width="13" height="13" shape-rendering="crispEdges"><rect x="0.5" y="0.5" width="12" height="12" fill="#fff" stroke="#008080"/><path d="M1 1h5l-5 5z" fill="#c0c0c0"/><path d="M2.8 6.2L5.3 9.2L10.6 3.4" stroke="#008000" stroke-width="2.6" fill="none" shape-rendering="auto"/></svg>
<svg class="a" style="left:569px;top:291px" width="13" height="13" shape-rendering="crispEdges"><rect x="0.5" y="0.5" width="12" height="12" fill="#fff" stroke="#008080"/><path d="M1 1h5l-5 5z" fill="#c0c0c0"/><path d="M2.8 6.2L5.3 9.2L10.6 3.4" stroke="#008000" stroke-width="2.6" fill="none" shape-rendering="auto"/></svg>
<svg class="a" style="left:569px;top:306px" width="13" height="13" shape-rendering="crispEdges"><rect x="0.5" y="0.5" width="12" height="12" fill="#fff" stroke="#008080"/><path d="M1 1h5l-5 5z" fill="#c0c0c0"/><path d="M2.8 6.2L5.3 9.2L10.6 3.4" stroke="#008000" stroke-width="2.6" fill="none" shape-rendering="auto"/></svg>
<svg class="a" style="left:569px;top:321px" width="13" height="13" shape-rendering="crispEdges"><rect x="0.5" y="0.5" width="12" height="12" fill="#fff" stroke="#008080"/><path d="M1 1h5l-5 5z" fill="#c0c0c0"/><path d="M2.8 6.2L5.3 9.2L10.6 3.4" stroke="#008000" stroke-width="2.6" fill="none" shape-rendering="auto"/></svg>
<div class="gb" style="left:561px;top:344px;width:162px;height:23px"></div>
<div class="gb" style="left:561px;top:374px;width:162px;height:62px"></div>
<div class="sb" style="left:18px;top:374px;width:170px;height:63px"></div>
<div class="a" style="left:26px;top:370px;width:64px;height:8px;background:#fff"></div>
<div class="a" style="left:28px;top:371px;width:8px;height:8px;border:1px solid #000;background:#00ffff"></div>
<div class="sb" style="left:198px;top:374px;width:170px;height:63px"></div>
<div class="a" style="left:206px;top:370px;width:74px;height:8px;background:#fff"></div>
<div class="a" style="left:208px;top:371px;width:8px;height:8px;border:1px solid #000;background:#ff0000"></div>
<div class="sb" style="left:379px;top:374px;width:170px;height:47px"></div>
<div class="a" style="left:387px;top:370px;width:42px;height:8px;background:#fff"></div>
<div class="a" style="left:389px;top:371px;width:8px;height:8px;border:1px solid #000;background:#ffff00"></div>
<svg width="743" height="449" style="position:absolute;left:0;top:0"><text x="54.5" y="77" text-anchor="end" style="font-family:'Liberation Sans', sans-serif;font-size:11px;fill:#000" xml:space="preserve">20</text>
<text x="54.5" y="104" text-anchor="end" style="font-family:'Liberation Sans', sans-serif;font-size:11px;fill:#000" xml:space="preserve">16</text>
<text x="54.5" y="130" text-anchor="end" style="font-family:'Liberation Sans', sans-serif;font-size:11px;fill:#000" xml:space="preserve">12</text>
<text x="54.5" y="156" text-anchor="end" style="font-family:'Liberation Sans', sans-serif;font-size:11px;fill:#000" xml:space="preserve">8</text>
<text x="54.5" y="182" text-anchor="end" style="font-family:'Liberation Sans', sans-serif;font-size:11px;fill:#000" xml:space="preserve">4</text>
<text x="533" y="84" text-anchor="start" style="font-family:'Liberation Sans', sans-serif;font-size:11px;fill:#000" xml:space="preserve">16</text>
<text x="533" y="100" text-anchor="start" style="font-family:'Liberation Sans', sans-serif;font-size:11px;fill:#000" xml:space="preserve">14</text>
<text x="533" y="115" text-anchor="start" style="font-family:'Liberation Sans', sans-serif;font-size:11px;fill:#000" xml:space="preserve">12</text>
<text x="533" y="131" text-anchor="start" style="font-family:'Liberation Sans', sans-serif;font-size:11px;fill:#000" xml:space="preserve">10</text>
<text x="533" y="147" text-anchor="start" style="font-family:'Liberation Sans', sans-serif;font-size:11px;fill:#000" xml:space="preserve">8</text>
<text x="533" y="162" text-anchor="start" style="font-family:'Liberation Sans', sans-serif;font-size:11px;fill:#000" xml:space="preserve">6</text>
<text x="533" y="178" text-anchor="start" style="font-family:'Liberation Sans', sans-serif;font-size:11px;fill:#000" xml:space="preserve">4</text>
<text x="533" y="193" text-anchor="start" style="font-family:'Liberation Sans', sans-serif;font-size:11px;fill:#000" xml:space="preserve">2</text>
<text x="54.5" y="227" text-anchor="end" style="font-family:'Liberation Sans', sans-serif;font-size:11px;fill:#000" xml:space="preserve">10</text>
<text x="54.5" y="254" text-anchor="end" style="font-family:'Liberation Sans', sans-serif;font-size:11px;fill:#000" xml:space="preserve">8</text>
<text x="54.5" y="280" text-anchor="end" style="font-family:'Liberation Sans', sans-serif;font-size:11px;fill:#000" xml:space="preserve">6</text>
<text x="54.5" y="306" text-anchor="end" style="font-family:'Liberation Sans', sans-serif;font-size:11px;fill:#000" xml:space="preserve">4</text>
<text x="54.5" y="332" text-anchor="end" style="font-family:'Liberation Sans', sans-serif;font-size:11px;fill:#000" xml:space="preserve">2</text>
<text x="533" y="228" text-anchor="start" style="font-family:'Liberation Sans', sans-serif;font-size:11px;fill:#000" xml:space="preserve">20</text>
<text x="533" y="254" text-anchor="start" style="font-family:'Liberation Sans', sans-serif;font-size:11px;fill:#000" xml:space="preserve">16</text>
<text x="533" y="280" text-anchor="start" style="font-family:'Liberation Sans', sans-serif;font-size:11px;fill:#000" xml:space="preserve">12</text>
<text x="533" y="307" text-anchor="start" style="font-family:'Liberation Sans', sans-serif;font-size:11px;fill:#000" xml:space="preserve">8</text>
<text x="533" y="333" text-anchor="start" style="font-family:'Liberation Sans', sans-serif;font-size:11px;fill:#000" xml:space="preserve">4</text>
<text x="62.9" y="217" text-anchor="middle" style="font-family:'Liberation Sans', sans-serif;font-size:11px;fill:#000;letter-spacing:-0.5px" xml:space="preserve">0.0</text>
<text x="62.9" y="367" text-anchor="middle" style="font-family:'Liberation Sans', sans-serif;font-size:11px;fill:#000;letter-spacing:-0.5px" xml:space="preserve">0.0</text>
<text x="114.8" y="217" text-anchor="middle" style="font-family:'Liberation Sans', sans-serif;font-size:11px;fill:#000;letter-spacing:-0.5px" xml:space="preserve">0.5</text>
<text x="114.8" y="367" text-anchor="middle" style="font-family:'Liberation Sans', sans-serif;font-size:11px;fill:#000;letter-spacing:-0.5px" xml:space="preserve">0.5</text>
<text x="166.6" y="217" text-anchor="middle" style="font-family:'Liberation Sans', sans-serif;font-size:11px;fill:#000;letter-spacing:-0.5px" xml:space="preserve">1.0</text>
<text x="166.6" y="367" text-anchor="middle" style="font-family:'Liberation Sans', sans-serif;font-size:11px;fill:#000;letter-spacing:-0.5px" xml:space="preserve">1.0</text>
<text x="218.5" y="217" text-anchor="middle" style="font-family:'Liberation Sans', sans-serif;font-size:11px;fill:#000;letter-spacing:-0.5px" xml:space="preserve">1.5</text>
<text x="218.5" y="367" text-anchor="middle" style="font-family:'Liberation Sans', sans-serif;font-size:11px;fill:#000;letter-spacing:-0.5px" xml:space="preserve">1.5</text>
<text x="270.4" y="217" text-anchor="middle" style="font-family:'Liberation Sans', sans-serif;font-size:11px;fill:#000;letter-spacing:-0.5px" xml:space="preserve">2.0</text>
<text x="270.4" y="367" text-anchor="middle" style="font-family:'Liberation Sans', sans-serif;font-size:11px;fill:#000;letter-spacing:-0.5px" xml:space="preserve">2.0</text>
<text x="322.2" y="217" text-anchor="middle" style="font-family:'Liberation Sans', sans-serif;font-size:11px;fill:#000;letter-spacing:-0.5px" xml:space="preserve">2.5</text>
<text x="322.2" y="367" text-anchor="middle" style="font-family:'Liberation Sans', sans-serif;font-size:11px;fill:#000;letter-spacing:-0.5px" xml:space="preserve">2.5</text>
<text x="374.1" y="217" text-anchor="middle" style="font-family:'Liberation Sans', sans-serif;font-size:11px;fill:#000;letter-spacing:-0.5px" xml:space="preserve">3.0</text>
<text x="374.1" y="367" text-anchor="middle" style="font-family:'Liberation Sans', sans-serif;font-size:11px;fill:#000;letter-spacing:-0.5px" xml:space="preserve">3.0</text>
<text x="426.0" y="217" text-anchor="middle" style="font-family:'Liberation Sans', sans-serif;font-size:11px;fill:#000;letter-spacing:-0.5px" xml:space="preserve">3.5</text>
<text x="426.0" y="367" text-anchor="middle" style="font-family:'Liberation Sans', sans-serif;font-size:11px;fill:#000;letter-spacing:-0.5px" xml:space="preserve">3.5</text>
<text x="477.9" y="217" text-anchor="middle" style="font-family:'Liberation Sans', sans-serif;font-size:11px;fill:#000;letter-spacing:-0.5px" xml:space="preserve">4.0</text>
<text x="477.9" y="367" text-anchor="middle" style="font-family:'Liberation Sans', sans-serif;font-size:11px;fill:#000;letter-spacing:-0.5px" xml:space="preserve">4.0</text>
<text x="529.7" y="217" text-anchor="middle" style="font-family:'Liberation Sans', sans-serif;font-size:11px;fill:#000;letter-spacing:-0.5px" xml:space="preserve">4.5</text>
<text x="529.7" y="367" text-anchor="middle" style="font-family:'Liberation Sans', sans-serif;font-size:11px;fill:#000;letter-spacing:-0.5px" xml:space="preserve">4.5</text>
<text x="274.5" y="68" text-anchor="start" style="font-family:'Liberation Sans', sans-serif;font-size:11px;fill:#000;letter-spacing:0.39px" xml:space="preserve">recorded with PLEXTOR DVDR   PX-716A   v1.08</text>
<path d="M585 64h10v1h-10zM585 65h10v1h-10zM585 66h1v1h-1zM589 66h2v1h-2zM594 66h1v1h-1zM585 67h10v1h-10zM585 68h1v1h-1zM587 68h6v1h-6zM594 68h1v1h-1zM585 69h1v1h-1zM588 69h1v1h-1zM591 69h1v1h-1zM594 69h1v1h-1zM585 70h1v1h-1zM587 70h6v1h-6zM594 70h1v1h-1zM585 71h1v1h-1zM588 71h1v1h-1zM591 71h1v1h-1zM594 71h1v1h-1zM585 72h1v1h-1zM587 72h2v1h-2zM591 72h1v1h-1zM594 72h1v1h-1zM585 73h1v1h-1zM593 73h2v1h-2zM598 62h1v1h-1zM603 62h1v1h-1zM598 63h1v1h-1zM603 63h1v1h-1zM605 63h1v1h-1zM597 64h4v1h-4zM603 64h1v1h-1zM605 64h1v1h-1zM598 65h1v1h-1zM600 65h1v1h-1zM602 65h1v1h-1zM606 65h1v1h-1zM598 66h1v1h-1zM600 66h8v1h-8zM598 67h1v1h-1zM600 67h1v1h-1zM597 68h1v1h-1zM600 68h1v1h-1zM602 68h5v1h-5zM597 69h3v1h-3zM602 69h1v1h-1zM606 69h1v1h-1zM599 70h2v1h-2zM602 70h1v1h-1zM606 70h1v1h-1zM598 71h1v1h-1zM602 71h5v1h-5zM597 72h1v1h-1zM602 72h1v1h-1zM606 72h1v1h-1z" fill="#000" shape-rendering="crispEdges"/>
<text x="692" y="73" text-anchor="start" style="font-family:'Liberation Sans', sans-serif;font-size:11px;fill:#000" xml:space="preserve">(X)</text>
<path d="M671 62h1v1h-1zM675 62h1v1h-1zM671 63h1v1h-1zM675 63h4v1h-4zM669 64h2v1h-2zM672 64h1v1h-1zM675 64h1v1h-1zM678 64h1v1h-1zM670 65h2v1h-2zM674 65h2v1h-2zM677 65h1v1h-1zM671 66h2v1h-2zM676 66h2v1h-2zM669 67h5v1h-5zM676 67h3v1h-3zM671 68h1v1h-1zM674 68h2v1h-2zM679 68h1v1h-1zM669 69h1v1h-1zM671 69h2v1h-2zM676 69h2v1h-2zM669 70h1v1h-1zM671 70h1v1h-1zM673 70h1v1h-1zM675 70h1v1h-1zM669 71h1v1h-1zM671 71h1v1h-1zM676 71h2v1h-2zM671 72h1v1h-1zM678 72h1v1h-1zM682 64h9v1h-9zM688 65h2v1h-2zM687 66h2v1h-2zM686 67h1v1h-1zM686 68h1v1h-1zM686 69h1v1h-1zM686 70h1v1h-1zM686 71h1v1h-1zM686 72h1v1h-1zM684 73h3v1h-3z" fill="#000" shape-rendering="crispEdges"/>
<rect x="699" y="74" width="7" height="1" fill="#000"/>
<path d="M577 82h1v1h-1zM579 82h1v1h-1zM571 83h6v1h-6zM578 83h1v1h-1zM569 86h10v1h-10zM574 87h1v1h-1zM574 88h1v1h-1zM573 89h2v1h-2zM573 90h1v1h-1zM571 91h2v1h-2zM584 85h1v1h-1zM583 86h1v1h-1zM581 87h3v1h-3zM580 88h1v1h-1zM583 88h1v1h-1zM583 89h1v1h-1zM583 90h1v1h-1zM583 91h1v1h-1zM587 83h7v1h-7zM592 84h1v1h-1zM592 85h1v1h-1zM591 86h1v1h-1zM590 87h3v1h-3zM589 88h2v1h-2zM592 88h2v1h-2zM588 89h1v1h-1zM593 89h2v1h-2zM586 90h2v1h-2zM594 90h1v1h-1zM599 83h1v1h-1zM598 84h6v1h-6zM598 85h1v1h-1zM603 85h1v1h-1zM597 86h1v1h-1zM602 86h1v1h-1zM596 87h1v1h-1zM602 87h1v1h-1zM601 88h1v1h-1zM600 89h2v1h-2zM599 90h2v1h-2zM597 91h2v1h-2zM606 82h1v1h-1zM611 82h1v1h-1zM606 83h1v1h-1zM608 83h7v1h-7zM606 84h2v1h-2zM611 84h1v1h-1zM605 85h3v1h-3zM609 85h6v1h-6zM604 86h1v1h-1zM606 86h1v1h-1zM608 86h7v1h-7zM604 87h1v1h-1zM606 87h1v1h-1zM609 87h5v1h-5zM606 88h1v1h-1zM609 88h5v1h-5zM606 89h1v1h-1zM609 89h1v1h-1zM613 89h1v1h-1zM606 90h1v1h-1zM609 90h5v1h-5zM606 91h1v1h-1zM609 91h1v1h-1zM613 91h1v1h-1zM606 92h1v1h-1zM609 92h1v1h-1zM612 92h2v1h-2zM619 82h1v1h-1zM619 83h1v1h-1zM622 83h5v1h-5zM617 84h6v1h-6zM626 84h1v1h-1zM617 85h6v1h-6zM624 85h3v1h-3zM618 86h1v1h-1zM620 86h1v1h-1zM622 86h1v1h-1zM618 87h1v1h-1zM620 87h1v1h-1zM622 87h5v1h-5zM617 88h7v1h-7zM626 88h1v1h-1zM619 89h1v1h-1zM622 89h1v1h-1zM624 89h1v1h-1zM626 89h1v1h-1zM617 90h6v1h-6zM625 90h1v1h-1zM619 91h1v1h-1zM622 91h1v1h-1zM624 91h3v1h-3zM619 92h1v1h-1zM622 92h2v1h-2zM627 92h1v1h-1z" fill="#0000ff" shape-rendering="crispEdges"/>
<text x="594.5" y="105" text-anchor="start" style="font-family:'Liberation Sans', sans-serif;font-size:11px;fill:#000" xml:space="preserve">:</text>
<path d="M572 95h1v1h-1zM571 96h6v1h-6zM571 97h1v1h-1zM576 97h1v1h-1zM570 98h2v1h-2zM575 98h1v1h-1zM569 99h1v1h-1zM572 99h1v1h-1zM575 99h1v1h-1zM573 100h2v1h-2zM573 101h2v1h-2zM572 102h2v1h-2zM571 103h1v1h-1zM570 104h1v1h-1zM584 95h1v1h-1zM584 96h1v1h-1zM583 97h1v1h-1zM581 98h2v1h-2zM580 99h3v1h-3zM578 100h2v1h-2zM582 100h1v1h-1zM582 101h1v1h-1zM582 102h1v1h-1zM582 103h1v1h-1zM582 104h1v1h-1zM592 95h3v1h-3zM592 96h3v1h-3zM585 97h8v1h-8zM592 98h1v1h-1zM591 99h1v1h-1zM591 100h1v1h-1zM590 101h1v1h-1zM589 102h2v1h-2zM588 103h2v1h-2zM586 104h2v1h-2z" fill="#000" shape-rendering="crispEdges"/>
<text x="618" y="105" text-anchor="start" style="font-family:'Liberation Sans', sans-serif;font-size:11px;fill:#000080" xml:space="preserve">DVD-R</text>
<text x="569" y="120" text-anchor="start" style="font-family:'Liberation Sans', sans-serif;font-size:11px;fill:#000" xml:space="preserve">ID:</text>
<text x="618" y="120" text-anchor="start" style="font-family:'Liberation Sans', sans-serif;font-size:11px;fill:#000080" xml:space="preserve">RITEKF1</text>
<text x="592" y="135" text-anchor="start" style="font-family:'Liberation Sans', sans-serif;font-size:11px;fill:#000" xml:space="preserve">:</text>
<path d="M571 126h8v1h-8zM571 127h1v1h-1zM578 127h1v1h-1zM571 128h1v1h-1zM578 128h1v1h-1zM571 129h1v1h-1zM578 129h1v1h-1zM571 130h8v1h-8zM571 131h1v1h-1zM578 131h1v1h-1zM571 132h1v1h-1zM578 132h1v1h-1zM571 133h1v1h-1zM578 133h1v1h-1zM571 134h8v1h-8zM571 135h1v1h-1zM578 135h1v1h-1zM584 124h1v1h-1zM590 124h1v1h-1zM584 125h1v1h-1zM590 125h1v1h-1zM583 126h1v1h-1zM590 126h1v1h-1zM583 127h1v1h-1zM585 127h7v1h-7zM582 128h2v1h-2zM590 128h1v1h-1zM582 129h2v1h-2zM586 129h1v1h-1zM590 129h1v1h-1zM583 130h1v1h-1zM587 130h1v1h-1zM590 130h1v1h-1zM583 131h1v1h-1zM587 131h2v1h-2zM590 131h1v1h-1zM583 132h1v1h-1zM590 132h1v1h-1zM583 133h1v1h-1zM590 133h1v1h-1zM583 134h1v1h-1zM588 134h3v1h-3z" fill="#000" shape-rendering="crispEdges"/>
<text x="618" y="135" text-anchor="start" style="font-family:'Liberation Sans', sans-serif;font-size:11px;fill:#000080" xml:space="preserve">24 August 2005</text>
<text x="569" y="150" text-anchor="start" style="font-family:'Liberation Sans', sans-serif;font-size:11px;fill:#000" xml:space="preserve">Label:</text>
<text x="618" y="150" text-anchor="start" style="font-family:'Liberation Sans', sans-serif;font-size:11px;fill:#000080" xml:space="preserve">CDS_TEST_B2</text>
<text x="569.5" y="165" text-anchor="start" style="font-family:'Liberation Sans', sans-serif;font-size:11px;fill:#0000ff;letter-spacing:0.4px" xml:space="preserve">Settings</text>
<path d="M572 173h1v1h-1zM570 174h10v1h-10zM572 175h1v1h-1zM570 176h5v1h-5zM570 177h1v1h-1zM572 177h1v1h-1zM574 177h1v1h-1zM570 178h10v1h-10zM570 179h1v1h-1zM572 179h1v1h-1zM574 179h1v1h-1zM576 179h1v1h-1zM570 180h5v1h-5zM576 180h1v1h-1zM570 181h5v1h-5zM576 181h1v1h-1zM579 181h1v1h-1zM572 182h1v1h-1zM575 182h1v1h-1zM577 182h3v1h-3zM572 183h1v1h-1zM575 183h2v1h-2zM582 172h1v1h-1zM586 172h1v1h-1zM590 172h1v1h-1zM583 173h1v1h-1zM587 173h1v1h-1zM589 173h1v1h-1zM583 174h1v1h-1zM585 174h7v1h-7zM588 175h1v1h-1zM588 176h1v1h-1zM582 177h2v1h-2zM585 177h7v1h-7zM583 178h1v1h-1zM588 178h1v1h-1zM583 179h1v1h-1zM587 179h1v1h-1zM589 179h1v1h-1zM583 180h1v1h-1zM586 180h2v1h-2zM590 180h2v1h-2zM583 181h3v1h-3zM582 182h1v1h-1zM585 182h7v1h-7zM600 173h1v1h-1zM595 174h1v1h-1zM597 174h7v1h-7zM596 175h1v1h-1zM600 175h1v1h-1zM598 176h5v1h-5zM598 177h1v1h-1zM600 177h1v1h-1zM602 177h1v1h-1zM594 178h3v1h-3zM598 178h5v1h-5zM596 179h1v1h-1zM599 179h2v1h-2zM596 180h1v1h-1zM598 180h1v1h-1zM600 180h3v1h-3zM596 181h1v1h-1zM600 181h1v1h-1zM594 182h2v1h-2zM597 182h7v1h-7zM611 173h1v1h-1zM607 174h9v1h-9zM607 175h1v1h-1zM609 175h1v1h-1zM612 175h1v1h-1zM607 176h9v1h-9zM607 177h1v1h-1zM609 177h1v1h-1zM612 177h1v1h-1zM607 178h1v1h-1zM609 178h4v1h-4zM607 179h7v1h-7zM607 180h1v1h-1zM609 180h1v1h-1zM613 180h1v1h-1zM607 181h1v1h-1zM610 181h3v1h-3zM606 182h1v1h-1zM610 182h4v1h-4zM606 183h1v1h-1zM608 183h2v1h-2zM614 183h2v1h-2z" fill="#000" shape-rendering="crispEdges"/>
<path d="M570 200h10v1h-10zM570 201h10v1h-10zM570 202h1v1h-1zM574 202h2v1h-2zM579 202h1v1h-1zM570 203h10v1h-10zM570 204h1v1h-1zM572 204h6v1h-6zM579 204h1v1h-1zM570 205h1v1h-1zM573 205h1v1h-1zM576 205h1v1h-1zM579 205h1v1h-1zM570 206h1v1h-1zM572 206h6v1h-6zM579 206h1v1h-1zM570 207h1v1h-1zM573 207h1v1h-1zM576 207h1v1h-1zM579 207h1v1h-1zM570 208h1v1h-1zM572 208h2v1h-2zM576 208h1v1h-1zM579 208h1v1h-1zM570 209h1v1h-1zM578 209h2v1h-2zM583 198h1v1h-1zM588 198h1v1h-1zM583 199h1v1h-1zM588 199h1v1h-1zM590 199h1v1h-1zM582 200h4v1h-4zM588 200h1v1h-1zM590 200h1v1h-1zM583 201h1v1h-1zM585 201h1v1h-1zM587 201h1v1h-1zM591 201h1v1h-1zM583 202h1v1h-1zM585 202h8v1h-8zM583 203h1v1h-1zM585 203h1v1h-1zM582 204h1v1h-1zM585 204h1v1h-1zM587 204h5v1h-5zM582 205h3v1h-3zM587 205h1v1h-1zM591 205h1v1h-1zM584 206h2v1h-2zM587 206h1v1h-1zM591 206h1v1h-1zM583 207h1v1h-1zM587 207h5v1h-5zM582 208h1v1h-1zM587 208h1v1h-1zM591 208h1v1h-1z" fill="#000" shape-rendering="crispEdges"/>
<path d="M572 219h1v1h-1zM576 219h1v1h-1zM572 220h1v1h-1zM576 220h4v1h-4zM570 221h2v1h-2zM573 221h1v1h-1zM576 221h1v1h-1zM579 221h1v1h-1zM571 222h2v1h-2zM575 222h2v1h-2zM578 222h1v1h-1zM572 223h2v1h-2zM577 223h2v1h-2zM570 224h5v1h-5zM577 224h3v1h-3zM572 225h1v1h-1zM575 225h2v1h-2zM580 225h1v1h-1zM570 226h1v1h-1zM572 226h2v1h-2zM577 226h2v1h-2zM570 227h1v1h-1zM572 227h1v1h-1zM574 227h1v1h-1zM576 227h1v1h-1zM570 228h1v1h-1zM572 228h1v1h-1zM577 228h2v1h-2zM572 229h1v1h-1zM579 229h1v1h-1zM583 221h9v1h-9zM589 222h2v1h-2zM588 223h2v1h-2zM587 224h1v1h-1zM587 225h1v1h-1zM587 226h1v1h-1zM587 227h1v1h-1zM587 228h1v1h-1zM587 229h1v1h-1zM585 230h3v1h-3zM596 219h1v1h-1zM600 219h1v1h-1zM596 220h1v1h-1zM600 220h1v1h-1zM595 221h1v1h-1zM600 221h1v1h-1zM595 222h1v1h-1zM597 222h7v1h-7zM594 223h2v1h-2zM594 224h2v1h-2zM598 224h1v1h-1zM602 224h1v1h-1zM595 225h1v1h-1zM598 225h1v1h-1zM601 225h1v1h-1zM595 226h1v1h-1zM599 226h1v1h-1zM601 226h1v1h-1zM595 227h1v1h-1zM601 227h1v1h-1zM595 228h9v1h-9zM595 229h1v1h-1zM607 221h8v1h-8zM607 222h8v1h-8zM606 223h10v1h-10zM610 224h1v1h-1zM607 225h1v1h-1zM609 225h6v1h-6zM607 226h1v1h-1zM609 226h6v1h-6zM607 227h1v1h-1zM609 227h6v1h-6zM607 228h1v1h-1zM609 228h6v1h-6zM607 229h9v1h-9zM607 230h1v1h-1z" fill="#000" shape-rendering="crispEdges"/>
<text x="635" y="184" text-anchor="start" style="font-family:'Liberation Sans', sans-serif;font-size:11px;fill:#000" xml:space="preserve">4 X</text>
<text x="633" y="207" text-anchor="start" style="font-family:'Liberation Sans', sans-serif;font-size:11.4px;fill:#000" xml:space="preserve">0000 MB</text>
<text x="633" y="229" text-anchor="start" style="font-family:'Liberation Sans', sans-serif;font-size:11.4px;fill:#000" xml:space="preserve">4489 MB</text>
<text x="584.2" y="253" text-anchor="start" style="font-family:'Liberation Sans', sans-serif;font-size:11px;fill:#000" xml:space="preserve">Quick Scan</text>
<text x="584.2" y="272" text-anchor="start" style="font-family:'Liberation Sans', sans-serif;font-size:11px;fill:#000" xml:space="preserve">Show C1/PIE</text>
<text x="584.2" y="287" text-anchor="start" style="font-family:'Liberation Sans', sans-serif;font-size:11px;fill:#000" xml:space="preserve">Show C2/PIF</text>
<text x="584.2" y="302" text-anchor="start" style="font-family:'Liberation Sans', sans-serif;font-size:11px;fill:#000" xml:space="preserve">Show Jitter</text>
<text x="584.2" y="317" text-anchor="start" style="font-family:'Liberation Sans', sans-serif;font-size:11px;fill:#000" xml:space="preserve">Show Read Speed</text>
<text x="584.2" y="332" text-anchor="start" style="font-family:'Liberation Sans', sans-serif;font-size:11px;fill:#000" xml:space="preserve">Show Write Speed</text>
<text x="619.5" y="360" text-anchor="start" style="font-family:'Liberation Sans', sans-serif;font-size:11px;fill:#000" xml:space="preserve">:</text>
<path d="M572 351h6v1h-6zM572 352h1v1h-1zM577 352h1v1h-1zM572 353h1v1h-1zM577 353h1v1h-1zM572 354h6v1h-6zM570 356h10v1h-10zM570 357h1v1h-1zM574 357h2v1h-2zM579 357h1v1h-1zM570 358h1v1h-1zM574 358h2v1h-2zM579 358h1v1h-1zM570 359h10v1h-10zM570 360h1v1h-1zM574 360h2v1h-2zM579 360h1v1h-1zM585 350h2v1h-2zM589 350h2v1h-2zM583 351h2v1h-2zM587 351h2v1h-2zM583 352h9v1h-9zM583 353h1v1h-1zM585 353h1v1h-1zM587 353h1v1h-1zM589 353h1v1h-1zM582 354h9v1h-9zM583 355h8v1h-8zM583 356h8v1h-8zM583 357h1v1h-1zM590 357h1v1h-1zM583 358h8v1h-8zM585 359h1v1h-1zM588 359h2v1h-2zM582 360h3v1h-3zM590 360h2v1h-2zM594 351h7v1h-7zM599 352h1v1h-1zM599 353h1v1h-1zM598 354h1v1h-1zM597 355h3v1h-3zM596 356h2v1h-2zM599 356h2v1h-2zM595 357h1v1h-1zM600 357h2v1h-2zM593 358h2v1h-2zM601 358h1v1h-1zM602 352h8v1h-8zM609 353h1v1h-1zM609 354h1v1h-1zM609 355h1v1h-1zM609 356h1v1h-1zM609 357h1v1h-1zM602 358h8v1h-8zM609 359h1v1h-1zM611 351h9v1h-9zM619 352h1v1h-1zM615 353h1v1h-1zM618 353h1v1h-1zM615 354h1v1h-1zM617 354h1v1h-1zM615 355h1v1h-1zM614 356h1v1h-1zM614 357h1v1h-1zM613 358h1v1h-1zM612 359h1v1h-1z" fill="#000" shape-rendering="crispEdges"/>
<text x="707" y="360" text-anchor="end" style="font-family:'Liberation Sans', sans-serif;font-size:11px;fill:#000080" xml:space="preserve">97</text>
<text x="616" y="392" text-anchor="start" style="font-family:'Liberation Sans', sans-serif;font-size:11px;fill:#000" xml:space="preserve">:</text>
<path d="M577 382h1v1h-1zM571 383h1v1h-1zM574 383h1v1h-1zM576 383h1v1h-1zM571 384h1v1h-1zM574 384h6v1h-6zM573 385h2v1h-2zM576 385h1v1h-1zM572 386h1v1h-1zM574 386h5v1h-5zM570 387h2v1h-2zM574 387h1v1h-1zM576 387h1v1h-1zM571 388h1v1h-1zM574 388h5v1h-5zM571 389h1v1h-1zM574 389h1v1h-1zM576 389h1v1h-1zM571 390h1v1h-1zM574 390h6v1h-6zM570 391h1v1h-1zM572 391h8v1h-8zM584 383h1v1h-1zM586 383h6v1h-6zM583 384h1v1h-1zM582 385h1v1h-1zM584 386h8v1h-8zM583 387h2v1h-2zM589 387h1v1h-1zM582 388h3v1h-3zM589 388h1v1h-1zM584 389h1v1h-1zM589 389h1v1h-1zM584 390h1v1h-1zM589 390h1v1h-1zM584 391h1v1h-1zM589 391h1v1h-1zM584 392h1v1h-1zM587 392h3v1h-3zM596 382h1v1h-1zM600 382h1v1h-1zM596 383h1v1h-1zM600 383h1v1h-1zM602 383h1v1h-1zM594 384h1v1h-1zM596 384h1v1h-1zM600 384h1v1h-1zM594 385h1v1h-1zM596 385h8v1h-8zM595 386h2v1h-2zM600 386h1v1h-1zM596 387h1v1h-1zM600 387h1v1h-1zM595 388h2v1h-2zM599 388h1v1h-1zM601 388h1v1h-1zM594 389h1v1h-1zM596 389h1v1h-1zM599 389h1v1h-1zM601 389h1v1h-1zM596 390h1v1h-1zM599 390h1v1h-1zM602 390h1v1h-1zM596 391h1v1h-1zM598 391h1v1h-1zM602 391h2v1h-2zM596 392h2v1h-2zM603 392h1v1h-1zM607 382h1v1h-1zM610 382h5v1h-5zM608 383h1v1h-1zM610 383h1v1h-1zM614 383h1v1h-1zM610 384h1v1h-1zM614 384h1v1h-1zM607 385h1v1h-1zM610 385h1v1h-1zM614 385h1v1h-1zM608 386h1v1h-1zM610 386h5v1h-5zM611 387h1v1h-1zM613 387h1v1h-1zM608 388h1v1h-1zM611 388h1v1h-1zM613 388h1v1h-1zM608 389h1v1h-1zM611 389h1v1h-1zM613 389h1v1h-1zM607 390h1v1h-1zM610 390h1v1h-1zM613 390h1v1h-1zM615 390h1v1h-1zM606 391h1v1h-1zM609 391h2v1h-2zM613 391h3v1h-3z" fill="#000" shape-rendering="crispEdges"/>
<text x="707" y="392" text-anchor="end" style="font-family:'Liberation Sans', sans-serif;font-size:11px;fill:#000080" xml:space="preserve">100 %</text>
<text x="611.5" y="411" text-anchor="start" style="font-family:'Liberation Sans', sans-serif;font-size:11px;fill:#000" xml:space="preserve">:</text>
<path d="M575 401h3v1h-3zM573 402h1v1h-1zM575 402h1v1h-1zM577 402h1v1h-1zM573 403h1v1h-1zM575 403h3v1h-3zM569 404h8v1h-8zM573 405h1v1h-1zM570 406h1v1h-1zM573 406h1v1h-1zM575 406h1v1h-1zM570 407h1v1h-1zM573 407h1v1h-1zM576 407h1v1h-1zM569 408h2v1h-2zM573 408h1v1h-1zM576 408h1v1h-1zM569 409h1v1h-1zM573 409h1v1h-1zM576 409h1v1h-1zM571 410h3v1h-3zM585 401h1v1h-1zM579 402h1v1h-1zM584 402h1v1h-1zM586 402h1v1h-1zM580 403h2v1h-2zM585 403h1v1h-1zM578 405h2v1h-2zM585 405h1v1h-1zM579 406h1v1h-1zM584 406h2v1h-2zM583 407h2v1h-2zM582 408h2v1h-2zM580 409h2v1h-2zM578 410h2v1h-2zM589 402h1v1h-1zM590 403h2v1h-2zM588 405h2v1h-2zM595 405h1v1h-1zM589 406h1v1h-1zM594 406h2v1h-2zM593 407h2v1h-2zM592 408h2v1h-2zM590 409h2v1h-2zM588 410h2v1h-2zM596 404h6v1h-6zM601 405h1v1h-1zM601 406h1v1h-1zM596 407h6v1h-6zM601 408h1v1h-1zM596 409h6v1h-6zM601 410h1v1h-1zM603 402h2v1h-2zM605 403h1v1h-1zM610 403h2v1h-2zM610 404h1v1h-1zM609 405h1v1h-1zM608 406h2v1h-2zM607 407h2v1h-2zM605 408h2v1h-2zM603 409h2v1h-2z" fill="#000" shape-rendering="crispEdges"/>
<text x="707" y="411" text-anchor="end" style="font-family:'Liberation Sans', sans-serif;font-size:11px;fill:#000080" xml:space="preserve">4488 MB</text>
<text x="592" y="429" text-anchor="start" style="font-family:'Liberation Sans', sans-serif;font-size:11px;fill:#000" xml:space="preserve">:</text>
<path d="M576 419h1v1h-1zM571 420h1v1h-1zM573 420h7v1h-7zM572 421h1v1h-1zM576 421h1v1h-1zM574 422h5v1h-5zM574 423h1v1h-1zM576 423h1v1h-1zM578 423h1v1h-1zM570 424h3v1h-3zM574 424h5v1h-5zM572 425h1v1h-1zM575 425h2v1h-2zM572 426h1v1h-1zM574 426h1v1h-1zM576 426h3v1h-3zM572 427h1v1h-1zM576 427h1v1h-1zM570 428h2v1h-2zM573 428h7v1h-7zM587 419h1v1h-1zM583 420h9v1h-9zM583 421h1v1h-1zM585 421h1v1h-1zM588 421h1v1h-1zM583 422h9v1h-9zM583 423h1v1h-1zM585 423h1v1h-1zM588 423h1v1h-1zM583 424h1v1h-1zM585 424h4v1h-4zM583 425h7v1h-7zM583 426h1v1h-1zM585 426h1v1h-1zM589 426h1v1h-1zM583 427h1v1h-1zM586 427h3v1h-3zM582 428h1v1h-1zM586 428h4v1h-4zM582 429h1v1h-1zM584 429h2v1h-2zM590 429h2v1h-2z" fill="#000" shape-rendering="crispEdges"/>
<text x="707" y="429" text-anchor="end" style="font-family:'Liberation Sans', sans-serif;font-size:11px;fill:#000080" xml:space="preserve">4.17 X</text>
<text x="40.5" y="378" text-anchor="start" style="font-family:'Liberation Sans', sans-serif;font-size:11px;fill:#000" xml:space="preserve">PI Errors</text>
<text x="50" y="393" text-anchor="start" style="font-family:'Liberation Sans', sans-serif;font-size:11px;fill:#000" xml:space="preserve">:</text>
<path d="M28 384h10v1h-10zM33 385h1v1h-1zM29 386h2v1h-2zM33 386h1v1h-1zM36 386h1v1h-1zM30 387h1v1h-1zM33 387h1v1h-1zM36 387h1v1h-1zM33 388h1v1h-1zM28 389h10v1h-10zM33 390h1v1h-1zM33 391h1v1h-1zM33 392h1v1h-1zM33 393h1v1h-1zM41 382h1v1h-1zM45 382h1v1h-1zM41 383h1v1h-1zM45 383h1v1h-1zM41 384h1v1h-1zM44 384h6v1h-6zM40 385h3v1h-3zM44 385h1v1h-1zM49 385h1v1h-1zM41 386h1v1h-1zM43 386h2v1h-2zM49 386h1v1h-1zM41 387h1v1h-1zM43 387h1v1h-1zM45 387h3v1h-3zM49 387h1v1h-1zM41 388h1v1h-1zM49 388h1v1h-1zM41 389h1v1h-1zM47 389h1v1h-1zM49 389h1v1h-1zM41 390h2v1h-2zM44 390h3v1h-3zM49 390h1v1h-1zM40 391h1v1h-1zM49 391h1v1h-1zM46 392h4v1h-4z" fill="#000" shape-rendering="crispEdges"/>
<text x="175.5" y="393" text-anchor="end" style="font-family:'Liberation Sans', sans-serif;font-size:11px;fill:#000080" xml:space="preserve">4.08</text>
<text x="50" y="411" text-anchor="start" style="font-family:'Liberation Sans', sans-serif;font-size:11px;fill:#000" xml:space="preserve">:</text>
<path d="M29 402h8v1h-8zM29 403h8v1h-8zM29 404h8v1h-8zM28 406h10v1h-10zM29 407h9v1h-9zM29 408h4v1h-4zM34 408h1v1h-1zM36 408h1v1h-1zM29 409h1v1h-1zM32 409h1v1h-1zM35 409h2v1h-2zM28 410h5v1h-5zM35 410h2v1h-2zM32 411h3v1h-3zM37 411h1v1h-1zM44 401h1v1h-1zM44 402h1v1h-1zM44 403h1v1h-1zM40 404h10v1h-10zM44 405h1v1h-1zM44 406h2v1h-2zM43 407h1v1h-1zM45 407h1v1h-1zM43 408h1v1h-1zM46 408h1v1h-1zM42 409h1v1h-1zM47 409h2v1h-2zM41 410h1v1h-1zM48 410h2v1h-2z" fill="#000" shape-rendering="crispEdges"/>
<text x="175.5" y="411" text-anchor="end" style="font-family:'Liberation Sans', sans-serif;font-size:11px;fill:#000080" xml:space="preserve">19</text>
<text x="51" y="429" text-anchor="start" style="font-family:'Liberation Sans', sans-serif;font-size:11px;fill:#000" xml:space="preserve"> :</text>
<path d="M32 419h2v1h-2zM31 420h4v1h-4zM31 421h1v1h-1zM34 421h2v1h-2zM30 422h1v1h-1zM35 422h2v1h-2zM28 423h8v1h-8zM37 423h2v1h-2zM29 425h8v1h-8zM29 426h1v1h-1zM36 426h1v1h-1zM29 427h1v1h-1zM36 427h1v1h-1zM29 428h8v1h-8zM29 429h1v1h-1zM36 429h1v1h-1zM47 419h1v1h-1zM40 420h4v1h-4zM47 420h1v1h-1zM40 421h5v1h-5zM47 421h1v1h-1zM47 422h1v1h-1zM40 423h4v1h-4zM45 423h5v1h-5zM40 424h4v1h-4zM47 424h1v1h-1zM47 425h1v1h-1zM40 426h5v1h-5zM47 426h1v1h-1zM40 427h1v1h-1zM44 427h1v1h-1zM47 427h1v1h-1zM40 428h5v1h-5zM47 428h1v1h-1zM40 429h1v1h-1zM44 429h1v1h-1zM47 429h1v1h-1z" fill="#000" shape-rendering="crispEdges"/>
<text x="175.5" y="429" text-anchor="end" style="font-family:'Liberation Sans', sans-serif;font-size:11px;fill:#000080" xml:space="preserve">44780</text>
<text x="220.5" y="378" text-anchor="start" style="font-family:'Liberation Sans', sans-serif;font-size:11px;fill:#000" xml:space="preserve">PI Failures</text>
<text x="230" y="393" text-anchor="start" style="font-family:'Liberation Sans', sans-serif;font-size:11px;fill:#000" xml:space="preserve">:</text>
<path d="M208 384h10v1h-10zM213 385h1v1h-1zM209 386h2v1h-2zM213 386h1v1h-1zM216 386h1v1h-1zM210 387h1v1h-1zM213 387h1v1h-1zM216 387h1v1h-1zM213 388h1v1h-1zM208 389h10v1h-10zM213 390h1v1h-1zM213 391h1v1h-1zM213 392h1v1h-1zM213 393h1v1h-1zM221 382h1v1h-1zM225 382h1v1h-1zM221 383h1v1h-1zM225 383h1v1h-1zM221 384h1v1h-1zM224 384h6v1h-6zM220 385h3v1h-3zM224 385h1v1h-1zM229 385h1v1h-1zM221 386h1v1h-1zM223 386h2v1h-2zM229 386h1v1h-1zM221 387h1v1h-1zM223 387h1v1h-1zM225 387h3v1h-3zM229 387h1v1h-1zM221 388h1v1h-1zM229 388h1v1h-1zM221 389h1v1h-1zM227 389h1v1h-1zM229 389h1v1h-1zM221 390h2v1h-2zM224 390h3v1h-3zM229 390h1v1h-1zM220 391h1v1h-1zM229 391h1v1h-1zM226 392h4v1h-4z" fill="#000" shape-rendering="crispEdges"/>
<text x="357.5" y="393" text-anchor="end" style="font-family:'Liberation Sans', sans-serif;font-size:11px;fill:#000080" xml:space="preserve">0.15</text>
<text x="230" y="411" text-anchor="start" style="font-family:'Liberation Sans', sans-serif;font-size:11px;fill:#000" xml:space="preserve">:</text>
<path d="M209 402h8v1h-8zM209 403h8v1h-8zM209 404h8v1h-8zM208 406h10v1h-10zM209 407h9v1h-9zM209 408h4v1h-4zM214 408h1v1h-1zM216 408h1v1h-1zM209 409h1v1h-1zM212 409h1v1h-1zM215 409h2v1h-2zM208 410h5v1h-5zM215 410h2v1h-2zM212 411h3v1h-3zM217 411h1v1h-1zM224 401h1v1h-1zM224 402h1v1h-1zM224 403h1v1h-1zM220 404h10v1h-10zM224 405h1v1h-1zM224 406h2v1h-2zM223 407h1v1h-1zM225 407h1v1h-1zM223 408h1v1h-1zM226 408h1v1h-1zM222 409h1v1h-1zM227 409h2v1h-2zM221 410h1v1h-1zM228 410h2v1h-2z" fill="#000" shape-rendering="crispEdges"/>
<text x="357.5" y="411" text-anchor="end" style="font-family:'Liberation Sans', sans-serif;font-size:11px;fill:#000080" xml:space="preserve">6</text>
<text x="231" y="429" text-anchor="start" style="font-family:'Liberation Sans', sans-serif;font-size:11px;fill:#000" xml:space="preserve"> :</text>
<path d="M212 419h2v1h-2zM211 420h4v1h-4zM211 421h1v1h-1zM214 421h2v1h-2zM210 422h1v1h-1zM215 422h2v1h-2zM208 423h8v1h-8zM217 423h2v1h-2zM209 425h8v1h-8zM209 426h1v1h-1zM216 426h1v1h-1zM209 427h1v1h-1zM216 427h1v1h-1zM209 428h8v1h-8zM209 429h1v1h-1zM216 429h1v1h-1zM227 419h1v1h-1zM220 420h4v1h-4zM227 420h1v1h-1zM220 421h5v1h-5zM227 421h1v1h-1zM227 422h1v1h-1zM220 423h4v1h-4zM225 423h5v1h-5zM220 424h4v1h-4zM227 424h1v1h-1zM227 425h1v1h-1zM220 426h5v1h-5zM227 426h1v1h-1zM220 427h1v1h-1zM224 427h1v1h-1zM227 427h1v1h-1zM220 428h5v1h-5zM227 428h1v1h-1zM220 429h1v1h-1zM224 429h1v1h-1zM227 429h1v1h-1z" fill="#000" shape-rendering="crispEdges"/>
<text x="357.5" y="429" text-anchor="end" style="font-family:'Liberation Sans', sans-serif;font-size:11px;fill:#000080" xml:space="preserve">1714</text>
<text x="401.5" y="378" text-anchor="start" style="font-family:'Liberation Sans', sans-serif;font-size:11px;fill:#000" xml:space="preserve">Jitter</text>
<text x="412" y="393" text-anchor="start" style="font-family:'Liberation Sans', sans-serif;font-size:11px;fill:#000" xml:space="preserve">:</text>
<path d="M390 384h10v1h-10zM395 385h1v1h-1zM391 386h2v1h-2zM395 386h1v1h-1zM398 386h1v1h-1zM392 387h1v1h-1zM395 387h1v1h-1zM398 387h1v1h-1zM395 388h1v1h-1zM390 389h10v1h-10zM395 390h1v1h-1zM395 391h1v1h-1zM395 392h1v1h-1zM395 393h1v1h-1zM403 382h1v1h-1zM407 382h1v1h-1zM403 383h1v1h-1zM407 383h1v1h-1zM403 384h1v1h-1zM406 384h6v1h-6zM402 385h3v1h-3zM406 385h1v1h-1zM411 385h1v1h-1zM403 386h1v1h-1zM405 386h2v1h-2zM411 386h1v1h-1zM403 387h1v1h-1zM405 387h1v1h-1zM407 387h3v1h-3zM411 387h1v1h-1zM403 388h1v1h-1zM411 388h1v1h-1zM403 389h1v1h-1zM409 389h1v1h-1zM411 389h1v1h-1zM403 390h2v1h-2zM406 390h3v1h-3zM411 390h1v1h-1zM402 391h1v1h-1zM411 391h1v1h-1zM408 392h4v1h-4z" fill="#000" shape-rendering="crispEdges"/>
<text x="538" y="393" text-anchor="end" style="font-family:'Liberation Sans', sans-serif;font-size:11px;fill:#000080" xml:space="preserve">9.48 %</text>
<text x="412" y="411" text-anchor="start" style="font-family:'Liberation Sans', sans-serif;font-size:11px;fill:#000" xml:space="preserve">:</text>
<path d="M391 402h8v1h-8zM391 403h8v1h-8zM391 404h8v1h-8zM390 406h10v1h-10zM391 407h9v1h-9zM391 408h4v1h-4zM396 408h1v1h-1zM398 408h1v1h-1zM391 409h1v1h-1zM394 409h1v1h-1zM397 409h2v1h-2zM390 410h5v1h-5zM397 410h2v1h-2zM394 411h3v1h-3zM399 411h1v1h-1zM406 401h1v1h-1zM406 402h1v1h-1zM406 403h1v1h-1zM402 404h10v1h-10zM406 405h1v1h-1zM406 406h2v1h-2zM405 407h1v1h-1zM407 407h1v1h-1zM405 408h1v1h-1zM408 408h1v1h-1zM404 409h1v1h-1zM409 409h2v1h-2zM403 410h1v1h-1zM410 410h2v1h-2z" fill="#000" shape-rendering="crispEdges"/>
<text x="538" y="411" text-anchor="end" style="font-family:'Liberation Sans', sans-serif;font-size:11px;fill:#000080" xml:space="preserve">11.9 %</text>
<text x="389" y="434" text-anchor="start" style="font-family:'Liberation Sans', sans-serif;font-size:11px;fill:#000" xml:space="preserve">PO Failures:</text>
<text x="538" y="434" text-anchor="end" style="font-family:'Liberation Sans', sans-serif;font-size:11px;fill:#000080" xml:space="preserve">0</text>
<text x="7" y="20" text-anchor="start" style="font-family:'Liberation Sans', sans-serif;font-size:12px;fill:#000;font-weight:bold;letter-spacing:1.05px" xml:space="preserve">CD Speed : Disc Quality Test - BENQ</text>
<text x="273" y="20" text-anchor="start" style="font-family:'Liberation Sans', sans-serif;font-size:12px;fill:#000;font-weight:bold;letter-spacing:0.6px" xml:space="preserve">DVD DD DW1640</text>
<text x="400" y="20" text-anchor="start" style="font-family:'Liberation Sans', sans-serif;font-size:12px;fill:#000;font-weight:bold;letter-spacing:0.8px" xml:space="preserve">BSKB</text>
<text x="21.8" y="49" text-anchor="start" style="font-family:'Liberation Sans', sans-serif;font-size:11px;fill:#000;letter-spacing:0.3px" xml:space="preserve">Disc Quality</text></svg>
</body></html>
